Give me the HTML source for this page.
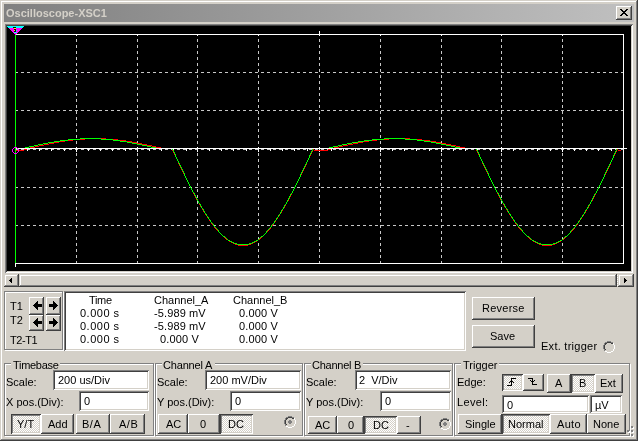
<!DOCTYPE html><html><head><meta charset="utf-8"><style>html,body{margin:0;padding:0;width:638px;height:441px;overflow:hidden;background:#d4d0c8}div,span,svg{position:absolute;box-sizing:border-box}span{white-space:pre;will-change:transform}</style></head><body><div style="left:0;top:0;width:638px;height:441px;background:#d4d0c8;box-shadow:inset -1px -1px #404040,inset 1px 1px #d4d0c8,inset -2px -2px #808080,inset 2px 2px #ffffff"></div>
<div style="left:4px;top:4px;width:630px;height:18px;background:linear-gradient(to right,#808080,#c0c0c0)"></div>
<span style="left:6px;top:7px;font:bold 11px/13px 'Liberation Sans',sans-serif;color:#d4d0c8;">Oscilloscope-XSC1</span>
<div style="left:616px;top:6px;width:16px;height:14px;background:#d4d0c8;box-shadow:inset -1px -1px #404040,inset 1px 1px #ffffff,inset -2px -2px #808080,inset 2px 2px #d4d0c8"></div>
<svg style="left:0;top:0" width="638" height="441" shape-rendering="crispEdges"><rect x="620" y="9" width="1" height="1"/><rect x="621" y="9" width="1" height="1"/><rect x="626" y="9" width="1" height="1"/><rect x="627" y="9" width="1" height="1"/><rect x="621" y="10" width="1" height="1"/><rect x="622" y="10" width="1" height="1"/><rect x="625" y="10" width="1" height="1"/><rect x="626" y="10" width="1" height="1"/><rect x="622" y="11" width="1" height="1"/><rect x="623" y="11" width="1" height="1"/><rect x="624" y="11" width="1" height="1"/><rect x="625" y="11" width="1" height="1"/><rect x="623" y="12" width="1" height="1"/><rect x="624" y="12" width="1" height="1"/><rect x="622" y="13" width="1" height="1"/><rect x="623" y="13" width="1" height="1"/><rect x="624" y="13" width="1" height="1"/><rect x="625" y="13" width="1" height="1"/><rect x="621" y="14" width="1" height="1"/><rect x="622" y="14" width="1" height="1"/><rect x="625" y="14" width="1" height="1"/><rect x="626" y="14" width="1" height="1"/><rect x="620" y="15" width="1" height="1"/><rect x="621" y="15" width="1" height="1"/><rect x="626" y="15" width="1" height="1"/><rect x="627" y="15" width="1" height="1"/></svg>
<div style="left:5px;top:24px;width:628px;height:249px;background:#000;box-shadow:inset 1px 1px #808080,inset -1px -1px #ffffff,inset 2px 2px #404040,inset -2px -2px #d4d0c8"></div>
<svg style="left:0;top:0" width="638" height="441" shape-rendering="crispEdges"><line x1="76.5" y1="39" x2="76.5" y2="263" stroke="#c8c8c8" stroke-width="1" stroke-dasharray="3 3"/><line x1="137.5" y1="39" x2="137.5" y2="263" stroke="#c8c8c8" stroke-width="1" stroke-dasharray="3 3"/><line x1="197.5" y1="39" x2="197.5" y2="263" stroke="#c8c8c8" stroke-width="1" stroke-dasharray="3 3"/><line x1="258.5" y1="39" x2="258.5" y2="263" stroke="#c8c8c8" stroke-width="1" stroke-dasharray="3 3"/><line x1="319.5" y1="39" x2="319.5" y2="263" stroke="#c8c8c8" stroke-width="1" stroke-dasharray="3 3"/><line x1="380.5" y1="39" x2="380.5" y2="263" stroke="#c8c8c8" stroke-width="1" stroke-dasharray="3 3"/><line x1="441.5" y1="39" x2="441.5" y2="263" stroke="#c8c8c8" stroke-width="1" stroke-dasharray="3 3"/><line x1="501.5" y1="39" x2="501.5" y2="263" stroke="#c8c8c8" stroke-width="1" stroke-dasharray="3 3"/><line x1="562.5" y1="39" x2="562.5" y2="263" stroke="#c8c8c8" stroke-width="1" stroke-dasharray="3 3"/><line x1="15" y1="72.5" x2="623" y2="72.5" stroke="#c8c8c8" stroke-width="1" stroke-dasharray="3 3"/><line x1="15" y1="110.5" x2="623" y2="110.5" stroke="#c8c8c8" stroke-width="1" stroke-dasharray="3 3"/><line x1="15" y1="149.5" x2="623" y2="149.5" stroke="#c8c8c8" stroke-width="1" stroke-dasharray="3 3"/><line x1="15" y1="187.5" x2="623" y2="187.5" stroke="#c8c8c8" stroke-width="1" stroke-dasharray="3 3"/><line x1="15" y1="225.5" x2="623" y2="225.5" stroke="#c8c8c8" stroke-width="1" stroke-dasharray="3 3"/><rect x="15" y="34" width="609" height="1" fill="#fff"/><rect x="623" y="34" width="1" height="230" fill="#fff"/><rect x="15" y="263" width="609" height="1" fill="#fff"/><rect x="15" y="34" width="1" height="233" fill="#fff"/><rect x="76" y="35" width="1" height="1" fill="#fff"/><rect x="137" y="35" width="1" height="1" fill="#fff"/><rect x="197" y="35" width="1" height="1" fill="#fff"/><rect x="258" y="35" width="1" height="1" fill="#fff"/><rect x="319" y="35" width="1" height="1" fill="#fff"/><rect x="380" y="35" width="1" height="1" fill="#fff"/><rect x="441" y="35" width="1" height="1" fill="#fff"/><rect x="501" y="35" width="1" height="1" fill="#fff"/><rect x="562" y="35" width="1" height="1" fill="#fff"/><rect x="319" y="31" width="1" height="3" fill="#fff"/><rect x="15" y="148" width="612" height="1" fill="#fff"/><rect x="15" y="149" width="1" height="2" fill="#fff"/><rect x="27" y="149" width="1" height="2" fill="#fff"/><rect x="39" y="149" width="1" height="2" fill="#fff"/><rect x="51" y="149" width="1" height="2" fill="#fff"/><rect x="64" y="149" width="1" height="2" fill="#fff"/><rect x="76" y="149" width="1" height="2" fill="#fff"/><rect x="88" y="149" width="1" height="2" fill="#fff"/><rect x="100" y="149" width="1" height="2" fill="#fff"/><rect x="112" y="149" width="1" height="2" fill="#fff"/><rect x="125" y="149" width="1" height="2" fill="#fff"/><rect x="137" y="149" width="1" height="2" fill="#fff"/><rect x="149" y="149" width="1" height="2" fill="#fff"/><rect x="161" y="149" width="1" height="2" fill="#fff"/><rect x="173" y="149" width="1" height="2" fill="#fff"/><rect x="186" y="149" width="1" height="2" fill="#fff"/><rect x="197" y="149" width="1" height="2" fill="#fff"/><rect x="209" y="149" width="1" height="2" fill="#fff"/><rect x="221" y="149" width="1" height="2" fill="#fff"/><rect x="233" y="149" width="1" height="2" fill="#fff"/><rect x="246" y="149" width="1" height="2" fill="#fff"/><rect x="258" y="149" width="1" height="2" fill="#fff"/><rect x="270" y="149" width="1" height="2" fill="#fff"/><rect x="282" y="149" width="1" height="2" fill="#fff"/><rect x="294" y="149" width="1" height="2" fill="#fff"/><rect x="307" y="149" width="1" height="2" fill="#fff"/><rect x="319" y="149" width="1" height="2" fill="#fff"/><rect x="331" y="149" width="1" height="2" fill="#fff"/><rect x="343" y="149" width="1" height="2" fill="#fff"/><rect x="355" y="149" width="1" height="2" fill="#fff"/><rect x="368" y="149" width="1" height="2" fill="#fff"/><rect x="380" y="149" width="1" height="2" fill="#fff"/><rect x="392" y="149" width="1" height="2" fill="#fff"/><rect x="404" y="149" width="1" height="2" fill="#fff"/><rect x="416" y="149" width="1" height="2" fill="#fff"/><rect x="429" y="149" width="1" height="2" fill="#fff"/><rect x="441" y="149" width="1" height="2" fill="#fff"/><rect x="453" y="149" width="1" height="2" fill="#fff"/><rect x="465" y="149" width="1" height="2" fill="#fff"/><rect x="477" y="149" width="1" height="2" fill="#fff"/><rect x="490" y="149" width="1" height="2" fill="#fff"/><rect x="501" y="149" width="1" height="2" fill="#fff"/><rect x="513" y="149" width="1" height="2" fill="#fff"/><rect x="525" y="149" width="1" height="2" fill="#fff"/><rect x="537" y="149" width="1" height="2" fill="#fff"/><rect x="550" y="149" width="1" height="2" fill="#fff"/><rect x="562" y="149" width="1" height="2" fill="#fff"/><rect x="574" y="149" width="1" height="2" fill="#fff"/><rect x="586" y="149" width="1" height="2" fill="#fff"/><rect x="598" y="149" width="1" height="2" fill="#fff"/><rect x="611" y="149" width="1" height="2" fill="#fff"/><rect x="15" y="147" width="1" height="1" fill="#fff"/><rect x="15" y="149" width="1" height="3" fill="#fff"/><rect x="76" y="147" width="1" height="1" fill="#fff"/><rect x="76" y="149" width="1" height="3" fill="#fff"/><rect x="137" y="147" width="1" height="1" fill="#fff"/><rect x="137" y="149" width="1" height="3" fill="#fff"/><rect x="197" y="147" width="1" height="1" fill="#fff"/><rect x="197" y="149" width="1" height="3" fill="#fff"/><rect x="258" y="147" width="1" height="1" fill="#fff"/><rect x="258" y="149" width="1" height="3" fill="#fff"/><rect x="319" y="147" width="1" height="1" fill="#fff"/><rect x="319" y="149" width="1" height="3" fill="#fff"/><rect x="380" y="147" width="1" height="1" fill="#fff"/><rect x="380" y="149" width="1" height="3" fill="#fff"/><rect x="441" y="147" width="1" height="1" fill="#fff"/><rect x="441" y="149" width="1" height="3" fill="#fff"/><rect x="501" y="147" width="1" height="1" fill="#fff"/><rect x="501" y="149" width="1" height="3" fill="#fff"/><rect x="562" y="147" width="1" height="1" fill="#fff"/><rect x="562" y="149" width="1" height="3" fill="#fff"/><rect x="623" y="147" width="1" height="1" fill="#fff"/><rect x="623" y="149" width="1" height="3" fill="#fff"/><rect x="16" y="150" width="1" height="1" fill="#ff0000"/><rect x="17" y="150" width="1" height="1" fill="#ff0000"/><rect x="18" y="150" width="1" height="1" fill="#ff0000"/><rect x="19" y="150" width="1" height="1" fill="#ff0000"/><rect x="20" y="150" width="1" height="1" fill="#ff0000"/><rect x="21" y="150" width="1" height="1" fill="#ff0000"/><rect x="22" y="150" width="1" height="1" fill="#ff0000"/><rect x="23" y="150" width="1" height="1" fill="#ff0000"/><rect x="24" y="149" width="1" height="1" fill="#ff0000"/><rect x="25" y="149" width="1" height="1" fill="#ff0000"/><rect x="26" y="149" width="1" height="1" fill="#ff0000"/><rect x="27" y="148" width="1" height="1" fill="#ff0000"/><rect x="28" y="148" width="1" height="1" fill="#ff0000"/><rect x="29" y="148" width="1" height="1" fill="#ff0000"/><rect x="30" y="147" width="1" height="1" fill="#ff0000"/><rect x="31" y="147" width="1" height="1" fill="#ff0000"/><rect x="32" y="147" width="1" height="1" fill="#ff0000"/><rect x="33" y="147" width="1" height="1" fill="#ff0000"/><rect x="34" y="147" width="1" height="1" fill="#ff0000"/><rect x="35" y="146" width="1" height="1" fill="#ff0000"/><rect x="36" y="146" width="1" height="1" fill="#ff0000"/><rect x="37" y="146" width="1" height="1" fill="#ff0000"/><rect x="38" y="146" width="1" height="1" fill="#ff0000"/><rect x="39" y="145" width="1" height="1" fill="#ff0000"/><rect x="40" y="145" width="1" height="1" fill="#ff0000"/><rect x="41" y="145" width="1" height="1" fill="#ff0000"/><rect x="42" y="145" width="1" height="1" fill="#ff0000"/><rect x="43" y="145" width="1" height="1" fill="#ff0000"/><rect x="44" y="144" width="1" height="1" fill="#ff0000"/><rect x="45" y="144" width="1" height="1" fill="#ff0000"/><rect x="46" y="144" width="1" height="1" fill="#ff0000"/><rect x="47" y="144" width="1" height="1" fill="#ff0000"/><rect x="48" y="144" width="1" height="1" fill="#ff0000"/><rect x="49" y="143" width="1" height="1" fill="#ff0000"/><rect x="50" y="143" width="1" height="1" fill="#ff0000"/><rect x="51" y="143" width="1" height="1" fill="#ff0000"/><rect x="52" y="143" width="1" height="1" fill="#ff0000"/><rect x="53" y="143" width="1" height="1" fill="#ff0000"/><rect x="54" y="142" width="1" height="1" fill="#ff0000"/><rect x="55" y="142" width="1" height="1" fill="#ff0000"/><rect x="56" y="142" width="1" height="1" fill="#ff0000"/><rect x="57" y="142" width="1" height="1" fill="#ff0000"/><rect x="58" y="142" width="1" height="1" fill="#ff0000"/><rect x="59" y="141" width="1" height="1" fill="#ff0000"/><rect x="60" y="141" width="1" height="1" fill="#ff0000"/><rect x="61" y="141" width="1" height="1" fill="#ff0000"/><rect x="62" y="141" width="1" height="1" fill="#ff0000"/><rect x="63" y="141" width="1" height="1" fill="#ff0000"/><rect x="64" y="141" width="1" height="1" fill="#ff0000"/><rect x="65" y="140" width="1" height="1" fill="#ff0000"/><rect x="66" y="140" width="1" height="1" fill="#ff0000"/><rect x="67" y="140" width="1" height="1" fill="#ff0000"/><rect x="68" y="140" width="1" height="1" fill="#ff0000"/><rect x="69" y="140" width="1" height="1" fill="#ff0000"/><rect x="70" y="140" width="1" height="1" fill="#ff0000"/><rect x="71" y="140" width="1" height="1" fill="#ff0000"/><rect x="72" y="140" width="1" height="1" fill="#ff0000"/><rect x="73" y="139" width="1" height="1" fill="#ff0000"/><rect x="74" y="139" width="1" height="1" fill="#ff0000"/><rect x="75" y="139" width="1" height="1" fill="#ff0000"/><rect x="76" y="139" width="1" height="1" fill="#ff0000"/><rect x="77" y="139" width="1" height="1" fill="#ff0000"/><rect x="78" y="139" width="1" height="1" fill="#ff0000"/><rect x="79" y="139" width="1" height="1" fill="#ff0000"/><rect x="80" y="139" width="1" height="1" fill="#ff0000"/><rect x="81" y="139" width="1" height="1" fill="#ff0000"/><rect x="82" y="139" width="1" height="1" fill="#ff0000"/><rect x="83" y="139" width="1" height="1" fill="#ff0000"/><rect x="84" y="139" width="1" height="1" fill="#ff0000"/><rect x="85" y="138" width="1" height="1" fill="#ff0000"/><rect x="86" y="138" width="1" height="1" fill="#ff0000"/><rect x="87" y="138" width="1" height="1" fill="#ff0000"/><rect x="88" y="138" width="1" height="1" fill="#ff0000"/><rect x="89" y="138" width="1" height="1" fill="#ff0000"/><rect x="90" y="138" width="1" height="1" fill="#ff0000"/><rect x="91" y="138" width="1" height="1" fill="#ff0000"/><rect x="92" y="138" width="1" height="1" fill="#ff0000"/><rect x="93" y="138" width="1" height="1" fill="#ff0000"/><rect x="94" y="138" width="1" height="1" fill="#ff0000"/><rect x="95" y="138" width="1" height="1" fill="#ff0000"/><rect x="96" y="138" width="1" height="1" fill="#ff0000"/><rect x="97" y="138" width="1" height="1" fill="#ff0000"/><rect x="98" y="138" width="1" height="1" fill="#ff0000"/><rect x="99" y="138" width="1" height="1" fill="#ff0000"/><rect x="100" y="138" width="1" height="1" fill="#ff0000"/><rect x="101" y="138" width="1" height="1" fill="#ff0000"/><rect x="102" y="138" width="1" height="1" fill="#ff0000"/><rect x="103" y="138" width="1" height="1" fill="#ff0000"/><rect x="104" y="138" width="1" height="1" fill="#ff0000"/><rect x="105" y="138" width="1" height="1" fill="#ff0000"/><rect x="106" y="139" width="1" height="1" fill="#ff0000"/><rect x="107" y="139" width="1" height="1" fill="#ff0000"/><rect x="108" y="139" width="1" height="1" fill="#ff0000"/><rect x="109" y="139" width="1" height="1" fill="#ff0000"/><rect x="110" y="139" width="1" height="1" fill="#ff0000"/><rect x="111" y="139" width="1" height="1" fill="#ff0000"/><rect x="112" y="139" width="1" height="1" fill="#ff0000"/><rect x="113" y="139" width="1" height="1" fill="#ff0000"/><rect x="114" y="139" width="1" height="1" fill="#ff0000"/><rect x="115" y="139" width="1" height="1" fill="#ff0000"/><rect x="116" y="139" width="1" height="1" fill="#ff0000"/><rect x="117" y="139" width="1" height="1" fill="#ff0000"/><rect x="118" y="140" width="1" height="1" fill="#ff0000"/><rect x="119" y="140" width="1" height="1" fill="#ff0000"/><rect x="120" y="140" width="1" height="1" fill="#ff0000"/><rect x="121" y="140" width="1" height="1" fill="#ff0000"/><rect x="122" y="140" width="1" height="1" fill="#ff0000"/><rect x="123" y="140" width="1" height="1" fill="#ff0000"/><rect x="124" y="140" width="1" height="1" fill="#ff0000"/><rect x="125" y="140" width="1" height="1" fill="#ff0000"/><rect x="126" y="141" width="1" height="1" fill="#ff0000"/><rect x="127" y="141" width="1" height="1" fill="#ff0000"/><rect x="128" y="141" width="1" height="1" fill="#ff0000"/><rect x="129" y="141" width="1" height="1" fill="#ff0000"/><rect x="130" y="141" width="1" height="1" fill="#ff0000"/><rect x="131" y="141" width="1" height="1" fill="#ff0000"/><rect x="132" y="142" width="1" height="1" fill="#ff0000"/><rect x="133" y="142" width="1" height="1" fill="#ff0000"/><rect x="134" y="142" width="1" height="1" fill="#ff0000"/><rect x="135" y="142" width="1" height="1" fill="#ff0000"/><rect x="136" y="142" width="1" height="1" fill="#ff0000"/><rect x="137" y="143" width="1" height="1" fill="#ff0000"/><rect x="138" y="143" width="1" height="1" fill="#ff0000"/><rect x="139" y="143" width="1" height="1" fill="#ff0000"/><rect x="140" y="143" width="1" height="1" fill="#ff0000"/><rect x="141" y="143" width="1" height="1" fill="#ff0000"/><rect x="142" y="144" width="1" height="1" fill="#ff0000"/><rect x="143" y="144" width="1" height="1" fill="#ff0000"/><rect x="144" y="144" width="1" height="1" fill="#ff0000"/><rect x="145" y="144" width="1" height="1" fill="#ff0000"/><rect x="146" y="144" width="1" height="1" fill="#ff0000"/><rect x="147" y="145" width="1" height="1" fill="#ff0000"/><rect x="148" y="145" width="1" height="1" fill="#ff0000"/><rect x="149" y="145" width="1" height="1" fill="#ff0000"/><rect x="150" y="145" width="1" height="1" fill="#ff0000"/><rect x="151" y="145" width="1" height="1" fill="#ff0000"/><rect x="152" y="146" width="1" height="1" fill="#ff0000"/><rect x="153" y="146" width="1" height="1" fill="#ff0000"/><rect x="154" y="146" width="1" height="1" fill="#ff0000"/><rect x="155" y="146" width="1" height="1" fill="#ff0000"/><rect x="156" y="147" width="1" height="1" fill="#ff0000"/><rect x="157" y="147" width="1" height="1" fill="#ff0000"/><rect x="158" y="147" width="1" height="1" fill="#ff0000"/><rect x="159" y="147" width="1" height="1" fill="#ff0000"/><rect x="160" y="147" width="1" height="1" fill="#ff0000"/><rect x="161" y="148" width="1" height="1" fill="#ff0000"/><rect x="162" y="148" width="1" height="1" fill="#ff0000"/><rect x="163" y="148" width="1" height="1" fill="#ff0000"/><rect x="164" y="148" width="1" height="1" fill="#ff0000"/><rect x="165" y="148" width="1" height="1" fill="#ff0000"/><rect x="166" y="148" width="1" height="1" fill="#ff0000"/><rect x="167" y="148" width="1" height="1" fill="#ff0000"/><rect x="168" y="148" width="1" height="1" fill="#ff0000"/><rect x="169" y="148" width="1" height="1" fill="#ff0000"/><rect x="170" y="148" width="1" height="1" fill="#ff0000"/><rect x="171" y="148" width="1" height="1" fill="#ff0000"/><rect x="172" y="149" width="1" height="2" fill="#ff0000"/><rect x="173" y="151" width="1" height="2" fill="#ff0000"/><rect x="174" y="153" width="1" height="2" fill="#ff0000"/><rect x="175" y="155" width="1" height="2" fill="#ff0000"/><rect x="176" y="157" width="1" height="2" fill="#ff0000"/><rect x="177" y="159" width="1" height="2" fill="#ff0000"/><rect x="178" y="161" width="1" height="3" fill="#ff0000"/><rect x="179" y="164" width="1" height="2" fill="#ff0000"/><rect x="180" y="166" width="1" height="2" fill="#ff0000"/><rect x="181" y="168" width="1" height="2" fill="#ff0000"/><rect x="182" y="170" width="1" height="2" fill="#ff0000"/><rect x="183" y="172" width="1" height="2" fill="#ff0000"/><rect x="184" y="174" width="1" height="2" fill="#ff0000"/><rect x="185" y="176" width="1" height="2" fill="#ff0000"/><rect x="186" y="178" width="1" height="2" fill="#ff0000"/><rect x="187" y="180" width="1" height="2" fill="#ff0000"/><rect x="188" y="182" width="1" height="2" fill="#ff0000"/><rect x="189" y="184" width="1" height="2" fill="#ff0000"/><rect x="190" y="186" width="1" height="2" fill="#ff0000"/><rect x="191" y="188" width="1" height="2" fill="#ff0000"/><rect x="192" y="190" width="1" height="2" fill="#ff0000"/><rect x="193" y="192" width="1" height="2" fill="#ff0000"/><rect x="194" y="194" width="1" height="2" fill="#ff0000"/><rect x="195" y="196" width="1" height="2" fill="#ff0000"/><rect x="196" y="198" width="1" height="2" fill="#ff0000"/><rect x="197" y="200" width="1" height="1" fill="#ff0000"/><rect x="198" y="201" width="1" height="2" fill="#ff0000"/><rect x="199" y="203" width="1" height="2" fill="#ff0000"/><rect x="200" y="205" width="1" height="2" fill="#ff0000"/><rect x="201" y="207" width="1" height="1" fill="#ff0000"/><rect x="202" y="208" width="1" height="2" fill="#ff0000"/><rect x="203" y="210" width="1" height="2" fill="#ff0000"/><rect x="204" y="212" width="1" height="1" fill="#ff0000"/><rect x="205" y="213" width="1" height="2" fill="#ff0000"/><rect x="206" y="215" width="1" height="1" fill="#ff0000"/><rect x="207" y="216" width="1" height="2" fill="#ff0000"/><rect x="208" y="218" width="1" height="1" fill="#ff0000"/><rect x="209" y="219" width="1" height="2" fill="#ff0000"/><rect x="210" y="221" width="1" height="1" fill="#ff0000"/><rect x="211" y="222" width="1" height="2" fill="#ff0000"/><rect x="212" y="224" width="1" height="1" fill="#ff0000"/><rect x="213" y="225" width="1" height="1" fill="#ff0000"/><rect x="214" y="226" width="1" height="2" fill="#ff0000"/><rect x="215" y="228" width="1" height="1" fill="#ff0000"/><rect x="216" y="229" width="1" height="1" fill="#ff0000"/><rect x="217" y="230" width="1" height="1" fill="#ff0000"/><rect x="218" y="231" width="1" height="1" fill="#ff0000"/><rect x="219" y="232" width="1" height="1" fill="#ff0000"/><rect x="220" y="233" width="1" height="1" fill="#ff0000"/><rect x="221" y="234" width="1" height="1" fill="#ff0000"/><rect x="222" y="235" width="1" height="1" fill="#ff0000"/><rect x="223" y="236" width="1" height="1" fill="#ff0000"/><rect x="224" y="237" width="1" height="1" fill="#ff0000"/><rect x="225" y="238" width="1" height="1" fill="#ff0000"/><rect x="226" y="239" width="1" height="1" fill="#ff0000"/><rect x="227" y="239" width="1" height="1" fill="#ff0000"/><rect x="228" y="240" width="1" height="1" fill="#ff0000"/><rect x="229" y="241" width="1" height="1" fill="#ff0000"/><rect x="230" y="241" width="1" height="1" fill="#ff0000"/><rect x="231" y="242" width="1" height="1" fill="#ff0000"/><rect x="232" y="242" width="1" height="1" fill="#ff0000"/><rect x="233" y="243" width="1" height="1" fill="#ff0000"/><rect x="234" y="243" width="1" height="1" fill="#ff0000"/><rect x="235" y="244" width="1" height="1" fill="#ff0000"/><rect x="236" y="244" width="1" height="1" fill="#ff0000"/><rect x="237" y="244" width="1" height="1" fill="#ff0000"/><rect x="238" y="245" width="1" height="1" fill="#ff0000"/><rect x="239" y="245" width="1" height="1" fill="#ff0000"/><rect x="240" y="245" width="1" height="1" fill="#ff0000"/><rect x="241" y="245" width="1" height="1" fill="#ff0000"/><rect x="242" y="245" width="1" height="1" fill="#ff0000"/><rect x="243" y="245" width="1" height="1" fill="#ff0000"/><rect x="244" y="245" width="1" height="1" fill="#ff0000"/><rect x="245" y="245" width="1" height="1" fill="#ff0000"/><rect x="246" y="245" width="1" height="1" fill="#ff0000"/><rect x="247" y="245" width="1" height="1" fill="#ff0000"/><rect x="248" y="244" width="1" height="1" fill="#ff0000"/><rect x="249" y="244" width="1" height="1" fill="#ff0000"/><rect x="250" y="244" width="1" height="1" fill="#ff0000"/><rect x="251" y="243" width="1" height="1" fill="#ff0000"/><rect x="252" y="243" width="1" height="1" fill="#ff0000"/><rect x="253" y="242" width="1" height="1" fill="#ff0000"/><rect x="254" y="242" width="1" height="1" fill="#ff0000"/><rect x="255" y="241" width="1" height="1" fill="#ff0000"/><rect x="256" y="241" width="1" height="1" fill="#ff0000"/><rect x="257" y="240" width="1" height="1" fill="#ff0000"/><rect x="258" y="239" width="1" height="1" fill="#ff0000"/><rect x="259" y="239" width="1" height="1" fill="#ff0000"/><rect x="260" y="238" width="1" height="1" fill="#ff0000"/><rect x="261" y="237" width="1" height="1" fill="#ff0000"/><rect x="262" y="236" width="1" height="1" fill="#ff0000"/><rect x="263" y="235" width="1" height="1" fill="#ff0000"/><rect x="264" y="234" width="1" height="1" fill="#ff0000"/><rect x="265" y="233" width="1" height="1" fill="#ff0000"/><rect x="266" y="232" width="1" height="1" fill="#ff0000"/><rect x="267" y="231" width="1" height="1" fill="#ff0000"/><rect x="268" y="230" width="1" height="1" fill="#ff0000"/><rect x="269" y="229" width="1" height="1" fill="#ff0000"/><rect x="270" y="227" width="1" height="2" fill="#ff0000"/><rect x="271" y="226" width="1" height="1" fill="#ff0000"/><rect x="272" y="225" width="1" height="1" fill="#ff0000"/><rect x="273" y="223" width="1" height="2" fill="#ff0000"/><rect x="274" y="222" width="1" height="1" fill="#ff0000"/><rect x="275" y="220" width="1" height="2" fill="#ff0000"/><rect x="276" y="219" width="1" height="1" fill="#ff0000"/><rect x="277" y="217" width="1" height="2" fill="#ff0000"/><rect x="278" y="216" width="1" height="1" fill="#ff0000"/><rect x="279" y="214" width="1" height="2" fill="#ff0000"/><rect x="280" y="213" width="1" height="1" fill="#ff0000"/><rect x="281" y="211" width="1" height="2" fill="#ff0000"/><rect x="282" y="209" width="1" height="2" fill="#ff0000"/><rect x="283" y="208" width="1" height="1" fill="#ff0000"/><rect x="284" y="206" width="1" height="2" fill="#ff0000"/><rect x="285" y="204" width="1" height="2" fill="#ff0000"/><rect x="286" y="202" width="1" height="2" fill="#ff0000"/><rect x="287" y="201" width="1" height="1" fill="#ff0000"/><rect x="288" y="199" width="1" height="2" fill="#ff0000"/><rect x="289" y="197" width="1" height="2" fill="#ff0000"/><rect x="290" y="195" width="1" height="2" fill="#ff0000"/><rect x="291" y="193" width="1" height="2" fill="#ff0000"/><rect x="292" y="191" width="1" height="2" fill="#ff0000"/><rect x="293" y="189" width="1" height="2" fill="#ff0000"/><rect x="294" y="187" width="1" height="2" fill="#ff0000"/><rect x="295" y="185" width="1" height="2" fill="#ff0000"/><rect x="296" y="183" width="1" height="2" fill="#ff0000"/><rect x="297" y="181" width="1" height="2" fill="#ff0000"/><rect x="298" y="179" width="1" height="2" fill="#ff0000"/><rect x="299" y="177" width="1" height="2" fill="#ff0000"/><rect x="300" y="175" width="1" height="2" fill="#ff0000"/><rect x="301" y="173" width="1" height="2" fill="#ff0000"/><rect x="302" y="171" width="1" height="2" fill="#ff0000"/><rect x="303" y="169" width="1" height="2" fill="#ff0000"/><rect x="304" y="167" width="1" height="2" fill="#ff0000"/><rect x="305" y="165" width="1" height="2" fill="#ff0000"/><rect x="306" y="162" width="1" height="3" fill="#ff0000"/><rect x="307" y="160" width="1" height="2" fill="#ff0000"/><rect x="308" y="158" width="1" height="2" fill="#ff0000"/><rect x="309" y="156" width="1" height="2" fill="#ff0000"/><rect x="310" y="154" width="1" height="2" fill="#ff0000"/><rect x="311" y="152" width="1" height="2" fill="#ff0000"/><rect x="312" y="150" width="1" height="2" fill="#ff0000"/><rect x="313" y="149" width="1" height="1" fill="#ff0000"/><rect x="314" y="150" width="1" height="1" fill="#ff0000"/><rect x="315" y="150" width="1" height="1" fill="#ff0000"/><rect x="316" y="150" width="1" height="1" fill="#ff0000"/><rect x="317" y="150" width="1" height="1" fill="#ff0000"/><rect x="318" y="150" width="1" height="1" fill="#ff0000"/><rect x="319" y="150" width="1" height="1" fill="#ff0000"/><rect x="320" y="150" width="1" height="1" fill="#ff0000"/><rect x="321" y="150" width="1" height="1" fill="#ff0000"/><rect x="322" y="150" width="1" height="1" fill="#ff0000"/><rect x="323" y="150" width="1" height="1" fill="#ff0000"/><rect x="324" y="150" width="1" height="1" fill="#ff0000"/><rect x="325" y="150" width="1" height="1" fill="#ff0000"/><rect x="326" y="150" width="1" height="1" fill="#ff0000"/><rect x="327" y="150" width="1" height="1" fill="#ff0000"/><rect x="328" y="149" width="1" height="1" fill="#ff0000"/><rect x="329" y="149" width="1" height="1" fill="#ff0000"/><rect x="330" y="149" width="1" height="1" fill="#ff0000"/><rect x="331" y="148" width="1" height="1" fill="#ff0000"/><rect x="332" y="148" width="1" height="1" fill="#ff0000"/><rect x="333" y="148" width="1" height="1" fill="#ff0000"/><rect x="334" y="147" width="1" height="1" fill="#ff0000"/><rect x="335" y="147" width="1" height="1" fill="#ff0000"/><rect x="336" y="147" width="1" height="1" fill="#ff0000"/><rect x="337" y="147" width="1" height="1" fill="#ff0000"/><rect x="338" y="147" width="1" height="1" fill="#ff0000"/><rect x="339" y="146" width="1" height="1" fill="#ff0000"/><rect x="340" y="146" width="1" height="1" fill="#ff0000"/><rect x="341" y="146" width="1" height="1" fill="#ff0000"/><rect x="342" y="146" width="1" height="1" fill="#ff0000"/><rect x="343" y="145" width="1" height="1" fill="#ff0000"/><rect x="344" y="145" width="1" height="1" fill="#ff0000"/><rect x="345" y="145" width="1" height="1" fill="#ff0000"/><rect x="346" y="145" width="1" height="1" fill="#ff0000"/><rect x="347" y="145" width="1" height="1" fill="#ff0000"/><rect x="348" y="144" width="1" height="1" fill="#ff0000"/><rect x="349" y="144" width="1" height="1" fill="#ff0000"/><rect x="350" y="144" width="1" height="1" fill="#ff0000"/><rect x="351" y="144" width="1" height="1" fill="#ff0000"/><rect x="352" y="144" width="1" height="1" fill="#ff0000"/><rect x="353" y="143" width="1" height="1" fill="#ff0000"/><rect x="354" y="143" width="1" height="1" fill="#ff0000"/><rect x="355" y="143" width="1" height="1" fill="#ff0000"/><rect x="356" y="143" width="1" height="1" fill="#ff0000"/><rect x="357" y="143" width="1" height="1" fill="#ff0000"/><rect x="358" y="142" width="1" height="1" fill="#ff0000"/><rect x="359" y="142" width="1" height="1" fill="#ff0000"/><rect x="360" y="142" width="1" height="1" fill="#ff0000"/><rect x="361" y="142" width="1" height="1" fill="#ff0000"/><rect x="362" y="142" width="1" height="1" fill="#ff0000"/><rect x="363" y="141" width="1" height="1" fill="#ff0000"/><rect x="364" y="141" width="1" height="1" fill="#ff0000"/><rect x="365" y="141" width="1" height="1" fill="#ff0000"/><rect x="366" y="141" width="1" height="1" fill="#ff0000"/><rect x="367" y="141" width="1" height="1" fill="#ff0000"/><rect x="368" y="141" width="1" height="1" fill="#ff0000"/><rect x="369" y="140" width="1" height="1" fill="#ff0000"/><rect x="370" y="140" width="1" height="1" fill="#ff0000"/><rect x="371" y="140" width="1" height="1" fill="#ff0000"/><rect x="372" y="140" width="1" height="1" fill="#ff0000"/><rect x="373" y="140" width="1" height="1" fill="#ff0000"/><rect x="374" y="140" width="1" height="1" fill="#ff0000"/><rect x="375" y="140" width="1" height="1" fill="#ff0000"/><rect x="376" y="140" width="1" height="1" fill="#ff0000"/><rect x="377" y="139" width="1" height="1" fill="#ff0000"/><rect x="378" y="139" width="1" height="1" fill="#ff0000"/><rect x="379" y="139" width="1" height="1" fill="#ff0000"/><rect x="380" y="139" width="1" height="1" fill="#ff0000"/><rect x="381" y="139" width="1" height="1" fill="#ff0000"/><rect x="382" y="139" width="1" height="1" fill="#ff0000"/><rect x="383" y="139" width="1" height="1" fill="#ff0000"/><rect x="384" y="139" width="1" height="1" fill="#ff0000"/><rect x="385" y="139" width="1" height="1" fill="#ff0000"/><rect x="386" y="139" width="1" height="1" fill="#ff0000"/><rect x="387" y="139" width="1" height="1" fill="#ff0000"/><rect x="388" y="139" width="1" height="1" fill="#ff0000"/><rect x="389" y="138" width="1" height="1" fill="#ff0000"/><rect x="390" y="138" width="1" height="1" fill="#ff0000"/><rect x="391" y="138" width="1" height="1" fill="#ff0000"/><rect x="392" y="138" width="1" height="1" fill="#ff0000"/><rect x="393" y="138" width="1" height="1" fill="#ff0000"/><rect x="394" y="138" width="1" height="1" fill="#ff0000"/><rect x="395" y="138" width="1" height="1" fill="#ff0000"/><rect x="396" y="138" width="1" height="1" fill="#ff0000"/><rect x="397" y="138" width="1" height="1" fill="#ff0000"/><rect x="398" y="138" width="1" height="1" fill="#ff0000"/><rect x="399" y="138" width="1" height="1" fill="#ff0000"/><rect x="400" y="138" width="1" height="1" fill="#ff0000"/><rect x="401" y="138" width="1" height="1" fill="#ff0000"/><rect x="402" y="138" width="1" height="1" fill="#ff0000"/><rect x="403" y="138" width="1" height="1" fill="#ff0000"/><rect x="404" y="138" width="1" height="1" fill="#ff0000"/><rect x="405" y="138" width="1" height="1" fill="#ff0000"/><rect x="406" y="138" width="1" height="1" fill="#ff0000"/><rect x="407" y="138" width="1" height="1" fill="#ff0000"/><rect x="408" y="138" width="1" height="1" fill="#ff0000"/><rect x="409" y="138" width="1" height="1" fill="#ff0000"/><rect x="410" y="139" width="1" height="1" fill="#ff0000"/><rect x="411" y="139" width="1" height="1" fill="#ff0000"/><rect x="412" y="139" width="1" height="1" fill="#ff0000"/><rect x="413" y="139" width="1" height="1" fill="#ff0000"/><rect x="414" y="139" width="1" height="1" fill="#ff0000"/><rect x="415" y="139" width="1" height="1" fill="#ff0000"/><rect x="416" y="139" width="1" height="1" fill="#ff0000"/><rect x="417" y="139" width="1" height="1" fill="#ff0000"/><rect x="418" y="139" width="1" height="1" fill="#ff0000"/><rect x="419" y="139" width="1" height="1" fill="#ff0000"/><rect x="420" y="139" width="1" height="1" fill="#ff0000"/><rect x="421" y="139" width="1" height="1" fill="#ff0000"/><rect x="422" y="140" width="1" height="1" fill="#ff0000"/><rect x="423" y="140" width="1" height="1" fill="#ff0000"/><rect x="424" y="140" width="1" height="1" fill="#ff0000"/><rect x="425" y="140" width="1" height="1" fill="#ff0000"/><rect x="426" y="140" width="1" height="1" fill="#ff0000"/><rect x="427" y="140" width="1" height="1" fill="#ff0000"/><rect x="428" y="140" width="1" height="1" fill="#ff0000"/><rect x="429" y="140" width="1" height="1" fill="#ff0000"/><rect x="430" y="141" width="1" height="1" fill="#ff0000"/><rect x="431" y="141" width="1" height="1" fill="#ff0000"/><rect x="432" y="141" width="1" height="1" fill="#ff0000"/><rect x="433" y="141" width="1" height="1" fill="#ff0000"/><rect x="434" y="141" width="1" height="1" fill="#ff0000"/><rect x="435" y="141" width="1" height="1" fill="#ff0000"/><rect x="436" y="142" width="1" height="1" fill="#ff0000"/><rect x="437" y="142" width="1" height="1" fill="#ff0000"/><rect x="438" y="142" width="1" height="1" fill="#ff0000"/><rect x="439" y="142" width="1" height="1" fill="#ff0000"/><rect x="440" y="142" width="1" height="1" fill="#ff0000"/><rect x="441" y="143" width="1" height="1" fill="#ff0000"/><rect x="442" y="143" width="1" height="1" fill="#ff0000"/><rect x="443" y="143" width="1" height="1" fill="#ff0000"/><rect x="444" y="143" width="1" height="1" fill="#ff0000"/><rect x="445" y="143" width="1" height="1" fill="#ff0000"/><rect x="446" y="144" width="1" height="1" fill="#ff0000"/><rect x="447" y="144" width="1" height="1" fill="#ff0000"/><rect x="448" y="144" width="1" height="1" fill="#ff0000"/><rect x="449" y="144" width="1" height="1" fill="#ff0000"/><rect x="450" y="144" width="1" height="1" fill="#ff0000"/><rect x="451" y="145" width="1" height="1" fill="#ff0000"/><rect x="452" y="145" width="1" height="1" fill="#ff0000"/><rect x="453" y="145" width="1" height="1" fill="#ff0000"/><rect x="454" y="145" width="1" height="1" fill="#ff0000"/><rect x="455" y="145" width="1" height="1" fill="#ff0000"/><rect x="456" y="146" width="1" height="1" fill="#ff0000"/><rect x="457" y="146" width="1" height="1" fill="#ff0000"/><rect x="458" y="146" width="1" height="1" fill="#ff0000"/><rect x="459" y="146" width="1" height="1" fill="#ff0000"/><rect x="460" y="147" width="1" height="1" fill="#ff0000"/><rect x="461" y="147" width="1" height="1" fill="#ff0000"/><rect x="462" y="147" width="1" height="1" fill="#ff0000"/><rect x="463" y="147" width="1" height="1" fill="#ff0000"/><rect x="464" y="147" width="1" height="1" fill="#ff0000"/><rect x="465" y="148" width="1" height="1" fill="#ff0000"/><rect x="466" y="148" width="1" height="1" fill="#ff0000"/><rect x="467" y="148" width="1" height="1" fill="#ff0000"/><rect x="468" y="148" width="1" height="1" fill="#ff0000"/><rect x="469" y="148" width="1" height="1" fill="#ff0000"/><rect x="470" y="148" width="1" height="1" fill="#ff0000"/><rect x="471" y="148" width="1" height="1" fill="#ff0000"/><rect x="472" y="148" width="1" height="1" fill="#ff0000"/><rect x="473" y="148" width="1" height="1" fill="#ff0000"/><rect x="474" y="148" width="1" height="1" fill="#ff0000"/><rect x="475" y="148" width="1" height="1" fill="#ff0000"/><rect x="476" y="149" width="1" height="2" fill="#ff0000"/><rect x="477" y="151" width="1" height="2" fill="#ff0000"/><rect x="478" y="153" width="1" height="2" fill="#ff0000"/><rect x="479" y="155" width="1" height="2" fill="#ff0000"/><rect x="480" y="157" width="1" height="2" fill="#ff0000"/><rect x="481" y="159" width="1" height="2" fill="#ff0000"/><rect x="482" y="161" width="1" height="3" fill="#ff0000"/><rect x="483" y="164" width="1" height="2" fill="#ff0000"/><rect x="484" y="166" width="1" height="2" fill="#ff0000"/><rect x="485" y="168" width="1" height="2" fill="#ff0000"/><rect x="486" y="170" width="1" height="2" fill="#ff0000"/><rect x="487" y="172" width="1" height="2" fill="#ff0000"/><rect x="488" y="174" width="1" height="2" fill="#ff0000"/><rect x="489" y="176" width="1" height="2" fill="#ff0000"/><rect x="490" y="178" width="1" height="2" fill="#ff0000"/><rect x="491" y="180" width="1" height="2" fill="#ff0000"/><rect x="492" y="182" width="1" height="2" fill="#ff0000"/><rect x="493" y="184" width="1" height="2" fill="#ff0000"/><rect x="494" y="186" width="1" height="2" fill="#ff0000"/><rect x="495" y="188" width="1" height="2" fill="#ff0000"/><rect x="496" y="190" width="1" height="2" fill="#ff0000"/><rect x="497" y="192" width="1" height="2" fill="#ff0000"/><rect x="498" y="194" width="1" height="2" fill="#ff0000"/><rect x="499" y="196" width="1" height="2" fill="#ff0000"/><rect x="500" y="198" width="1" height="2" fill="#ff0000"/><rect x="501" y="200" width="1" height="1" fill="#ff0000"/><rect x="502" y="201" width="1" height="2" fill="#ff0000"/><rect x="503" y="203" width="1" height="2" fill="#ff0000"/><rect x="504" y="205" width="1" height="2" fill="#ff0000"/><rect x="505" y="207" width="1" height="1" fill="#ff0000"/><rect x="506" y="208" width="1" height="2" fill="#ff0000"/><rect x="507" y="210" width="1" height="2" fill="#ff0000"/><rect x="508" y="212" width="1" height="1" fill="#ff0000"/><rect x="509" y="213" width="1" height="2" fill="#ff0000"/><rect x="510" y="215" width="1" height="1" fill="#ff0000"/><rect x="511" y="216" width="1" height="2" fill="#ff0000"/><rect x="512" y="218" width="1" height="1" fill="#ff0000"/><rect x="513" y="219" width="1" height="2" fill="#ff0000"/><rect x="514" y="221" width="1" height="1" fill="#ff0000"/><rect x="515" y="222" width="1" height="2" fill="#ff0000"/><rect x="516" y="224" width="1" height="1" fill="#ff0000"/><rect x="517" y="225" width="1" height="1" fill="#ff0000"/><rect x="518" y="226" width="1" height="2" fill="#ff0000"/><rect x="519" y="228" width="1" height="1" fill="#ff0000"/><rect x="520" y="229" width="1" height="1" fill="#ff0000"/><rect x="521" y="230" width="1" height="1" fill="#ff0000"/><rect x="522" y="231" width="1" height="1" fill="#ff0000"/><rect x="523" y="232" width="1" height="1" fill="#ff0000"/><rect x="524" y="233" width="1" height="1" fill="#ff0000"/><rect x="525" y="234" width="1" height="1" fill="#ff0000"/><rect x="526" y="235" width="1" height="1" fill="#ff0000"/><rect x="527" y="236" width="1" height="1" fill="#ff0000"/><rect x="528" y="237" width="1" height="1" fill="#ff0000"/><rect x="529" y="238" width="1" height="1" fill="#ff0000"/><rect x="530" y="239" width="1" height="1" fill="#ff0000"/><rect x="531" y="239" width="1" height="1" fill="#ff0000"/><rect x="532" y="240" width="1" height="1" fill="#ff0000"/><rect x="533" y="241" width="1" height="1" fill="#ff0000"/><rect x="534" y="241" width="1" height="1" fill="#ff0000"/><rect x="535" y="242" width="1" height="1" fill="#ff0000"/><rect x="536" y="242" width="1" height="1" fill="#ff0000"/><rect x="537" y="243" width="1" height="1" fill="#ff0000"/><rect x="538" y="243" width="1" height="1" fill="#ff0000"/><rect x="539" y="244" width="1" height="1" fill="#ff0000"/><rect x="540" y="244" width="1" height="1" fill="#ff0000"/><rect x="541" y="244" width="1" height="1" fill="#ff0000"/><rect x="542" y="245" width="1" height="1" fill="#ff0000"/><rect x="543" y="245" width="1" height="1" fill="#ff0000"/><rect x="544" y="245" width="1" height="1" fill="#ff0000"/><rect x="545" y="245" width="1" height="1" fill="#ff0000"/><rect x="546" y="245" width="1" height="1" fill="#ff0000"/><rect x="547" y="245" width="1" height="1" fill="#ff0000"/><rect x="548" y="245" width="1" height="1" fill="#ff0000"/><rect x="549" y="245" width="1" height="1" fill="#ff0000"/><rect x="550" y="245" width="1" height="1" fill="#ff0000"/><rect x="551" y="245" width="1" height="1" fill="#ff0000"/><rect x="552" y="244" width="1" height="1" fill="#ff0000"/><rect x="553" y="244" width="1" height="1" fill="#ff0000"/><rect x="554" y="244" width="1" height="1" fill="#ff0000"/><rect x="555" y="243" width="1" height="1" fill="#ff0000"/><rect x="556" y="243" width="1" height="1" fill="#ff0000"/><rect x="557" y="242" width="1" height="1" fill="#ff0000"/><rect x="558" y="242" width="1" height="1" fill="#ff0000"/><rect x="559" y="241" width="1" height="1" fill="#ff0000"/><rect x="560" y="241" width="1" height="1" fill="#ff0000"/><rect x="561" y="240" width="1" height="1" fill="#ff0000"/><rect x="562" y="239" width="1" height="1" fill="#ff0000"/><rect x="563" y="239" width="1" height="1" fill="#ff0000"/><rect x="564" y="238" width="1" height="1" fill="#ff0000"/><rect x="565" y="237" width="1" height="1" fill="#ff0000"/><rect x="566" y="236" width="1" height="1" fill="#ff0000"/><rect x="567" y="235" width="1" height="1" fill="#ff0000"/><rect x="568" y="234" width="1" height="1" fill="#ff0000"/><rect x="569" y="233" width="1" height="1" fill="#ff0000"/><rect x="570" y="232" width="1" height="1" fill="#ff0000"/><rect x="571" y="231" width="1" height="1" fill="#ff0000"/><rect x="572" y="230" width="1" height="1" fill="#ff0000"/><rect x="573" y="229" width="1" height="1" fill="#ff0000"/><rect x="574" y="227" width="1" height="2" fill="#ff0000"/><rect x="575" y="226" width="1" height="1" fill="#ff0000"/><rect x="576" y="225" width="1" height="1" fill="#ff0000"/><rect x="577" y="223" width="1" height="2" fill="#ff0000"/><rect x="578" y="222" width="1" height="1" fill="#ff0000"/><rect x="579" y="220" width="1" height="2" fill="#ff0000"/><rect x="580" y="219" width="1" height="1" fill="#ff0000"/><rect x="581" y="217" width="1" height="2" fill="#ff0000"/><rect x="582" y="216" width="1" height="1" fill="#ff0000"/><rect x="583" y="214" width="1" height="2" fill="#ff0000"/><rect x="584" y="213" width="1" height="1" fill="#ff0000"/><rect x="585" y="211" width="1" height="2" fill="#ff0000"/><rect x="586" y="209" width="1" height="2" fill="#ff0000"/><rect x="587" y="208" width="1" height="1" fill="#ff0000"/><rect x="588" y="206" width="1" height="2" fill="#ff0000"/><rect x="589" y="204" width="1" height="2" fill="#ff0000"/><rect x="590" y="202" width="1" height="2" fill="#ff0000"/><rect x="591" y="201" width="1" height="1" fill="#ff0000"/><rect x="592" y="199" width="1" height="2" fill="#ff0000"/><rect x="593" y="197" width="1" height="2" fill="#ff0000"/><rect x="594" y="195" width="1" height="2" fill="#ff0000"/><rect x="595" y="193" width="1" height="2" fill="#ff0000"/><rect x="596" y="191" width="1" height="2" fill="#ff0000"/><rect x="597" y="189" width="1" height="2" fill="#ff0000"/><rect x="598" y="187" width="1" height="2" fill="#ff0000"/><rect x="599" y="185" width="1" height="2" fill="#ff0000"/><rect x="600" y="183" width="1" height="2" fill="#ff0000"/><rect x="601" y="181" width="1" height="2" fill="#ff0000"/><rect x="602" y="179" width="1" height="2" fill="#ff0000"/><rect x="603" y="177" width="1" height="2" fill="#ff0000"/><rect x="604" y="175" width="1" height="2" fill="#ff0000"/><rect x="605" y="173" width="1" height="2" fill="#ff0000"/><rect x="606" y="171" width="1" height="2" fill="#ff0000"/><rect x="607" y="169" width="1" height="2" fill="#ff0000"/><rect x="608" y="167" width="1" height="2" fill="#ff0000"/><rect x="609" y="165" width="1" height="2" fill="#ff0000"/><rect x="610" y="162" width="1" height="3" fill="#ff0000"/><rect x="611" y="160" width="1" height="2" fill="#ff0000"/><rect x="612" y="158" width="1" height="2" fill="#ff0000"/><rect x="613" y="156" width="1" height="2" fill="#ff0000"/><rect x="614" y="154" width="1" height="2" fill="#ff0000"/><rect x="615" y="152" width="1" height="2" fill="#ff0000"/><rect x="616" y="150" width="1" height="2" fill="#ff0000"/><rect x="617" y="149" width="1" height="1" fill="#ff0000"/><rect x="618" y="150" width="1" height="1" fill="#ff0000"/><rect x="619" y="150" width="1" height="1" fill="#ff0000"/><rect x="620" y="150" width="1" height="1" fill="#ff0000"/><rect x="16" y="148" width="1" height="1" fill="#00ff00"/><rect x="17" y="148" width="1" height="1" fill="#00ff00"/><rect x="18" y="148" width="1" height="1" fill="#00ff00"/><rect x="19" y="148" width="1" height="1" fill="#00ff00"/><rect x="20" y="148" width="1" height="1" fill="#00ff00"/><rect x="21" y="148" width="1" height="1" fill="#00ff00"/><rect x="22" y="148" width="1" height="1" fill="#00ff00"/><rect x="23" y="148" width="1" height="1" fill="#00ff00"/><rect x="24" y="148" width="1" height="1" fill="#00ff00"/><rect x="25" y="147" width="1" height="1" fill="#00ff00"/><rect x="26" y="147" width="1" height="1" fill="#00ff00"/><rect x="27" y="147" width="1" height="1" fill="#00ff00"/><rect x="28" y="147" width="1" height="1" fill="#00ff00"/><rect x="29" y="146" width="1" height="1" fill="#00ff00"/><rect x="30" y="146" width="1" height="1" fill="#00ff00"/><rect x="31" y="146" width="1" height="1" fill="#00ff00"/><rect x="32" y="146" width="1" height="1" fill="#00ff00"/><rect x="33" y="146" width="1" height="1" fill="#00ff00"/><rect x="34" y="145" width="1" height="1" fill="#00ff00"/><rect x="35" y="145" width="1" height="1" fill="#00ff00"/><rect x="36" y="145" width="1" height="1" fill="#00ff00"/><rect x="37" y="145" width="1" height="1" fill="#00ff00"/><rect x="38" y="144" width="1" height="1" fill="#00ff00"/><rect x="39" y="144" width="1" height="1" fill="#00ff00"/><rect x="40" y="144" width="1" height="1" fill="#00ff00"/><rect x="41" y="144" width="1" height="1" fill="#00ff00"/><rect x="42" y="144" width="1" height="1" fill="#00ff00"/><rect x="43" y="143" width="1" height="1" fill="#00ff00"/><rect x="44" y="143" width="1" height="1" fill="#00ff00"/><rect x="45" y="143" width="1" height="1" fill="#00ff00"/><rect x="46" y="143" width="1" height="1" fill="#00ff00"/><rect x="47" y="143" width="1" height="1" fill="#00ff00"/><rect x="48" y="142" width="1" height="1" fill="#00ff00"/><rect x="49" y="142" width="1" height="1" fill="#00ff00"/><rect x="50" y="142" width="1" height="1" fill="#00ff00"/><rect x="51" y="142" width="1" height="1" fill="#00ff00"/><rect x="52" y="142" width="1" height="1" fill="#00ff00"/><rect x="53" y="142" width="1" height="1" fill="#00ff00"/><rect x="54" y="141" width="1" height="1" fill="#00ff00"/><rect x="55" y="141" width="1" height="1" fill="#00ff00"/><rect x="56" y="141" width="1" height="1" fill="#00ff00"/><rect x="57" y="141" width="1" height="1" fill="#00ff00"/><rect x="58" y="141" width="1" height="1" fill="#00ff00"/><rect x="59" y="141" width="1" height="1" fill="#00ff00"/><rect x="60" y="140" width="1" height="1" fill="#00ff00"/><rect x="61" y="140" width="1" height="1" fill="#00ff00"/><rect x="62" y="140" width="1" height="1" fill="#00ff00"/><rect x="63" y="140" width="1" height="1" fill="#00ff00"/><rect x="64" y="140" width="1" height="1" fill="#00ff00"/><rect x="65" y="140" width="1" height="1" fill="#00ff00"/><rect x="66" y="140" width="1" height="1" fill="#00ff00"/><rect x="67" y="140" width="1" height="1" fill="#00ff00"/><rect x="68" y="139" width="1" height="1" fill="#00ff00"/><rect x="69" y="139" width="1" height="1" fill="#00ff00"/><rect x="70" y="139" width="1" height="1" fill="#00ff00"/><rect x="71" y="139" width="1" height="1" fill="#00ff00"/><rect x="72" y="139" width="1" height="1" fill="#00ff00"/><rect x="73" y="139" width="1" height="1" fill="#00ff00"/><rect x="74" y="139" width="1" height="1" fill="#00ff00"/><rect x="75" y="139" width="1" height="1" fill="#00ff00"/><rect x="76" y="139" width="1" height="1" fill="#00ff00"/><rect x="77" y="139" width="1" height="1" fill="#00ff00"/><rect x="78" y="139" width="1" height="1" fill="#00ff00"/><rect x="79" y="139" width="1" height="1" fill="#00ff00"/><rect x="80" y="138" width="1" height="1" fill="#00ff00"/><rect x="81" y="138" width="1" height="1" fill="#00ff00"/><rect x="82" y="138" width="1" height="1" fill="#00ff00"/><rect x="83" y="138" width="1" height="1" fill="#00ff00"/><rect x="84" y="138" width="1" height="1" fill="#00ff00"/><rect x="85" y="138" width="1" height="1" fill="#00ff00"/><rect x="86" y="138" width="1" height="1" fill="#00ff00"/><rect x="87" y="138" width="1" height="1" fill="#00ff00"/><rect x="88" y="138" width="1" height="1" fill="#00ff00"/><rect x="89" y="138" width="1" height="1" fill="#00ff00"/><rect x="90" y="138" width="1" height="1" fill="#00ff00"/><rect x="91" y="138" width="1" height="1" fill="#00ff00"/><rect x="92" y="138" width="1" height="1" fill="#00ff00"/><rect x="93" y="138" width="1" height="1" fill="#00ff00"/><rect x="94" y="138" width="1" height="1" fill="#00ff00"/><rect x="95" y="138" width="1" height="1" fill="#00ff00"/><rect x="96" y="138" width="1" height="1" fill="#00ff00"/><rect x="97" y="138" width="1" height="1" fill="#00ff00"/><rect x="98" y="138" width="1" height="1" fill="#00ff00"/><rect x="99" y="138" width="1" height="1" fill="#00ff00"/><rect x="100" y="138" width="1" height="1" fill="#00ff00"/><rect x="101" y="139" width="1" height="1" fill="#00ff00"/><rect x="102" y="139" width="1" height="1" fill="#00ff00"/><rect x="103" y="139" width="1" height="1" fill="#00ff00"/><rect x="104" y="139" width="1" height="1" fill="#00ff00"/><rect x="105" y="139" width="1" height="1" fill="#00ff00"/><rect x="106" y="139" width="1" height="1" fill="#00ff00"/><rect x="107" y="139" width="1" height="1" fill="#00ff00"/><rect x="108" y="139" width="1" height="1" fill="#00ff00"/><rect x="109" y="139" width="1" height="1" fill="#00ff00"/><rect x="110" y="139" width="1" height="1" fill="#00ff00"/><rect x="111" y="139" width="1" height="1" fill="#00ff00"/><rect x="112" y="139" width="1" height="1" fill="#00ff00"/><rect x="113" y="140" width="1" height="1" fill="#00ff00"/><rect x="114" y="140" width="1" height="1" fill="#00ff00"/><rect x="115" y="140" width="1" height="1" fill="#00ff00"/><rect x="116" y="140" width="1" height="1" fill="#00ff00"/><rect x="117" y="140" width="1" height="1" fill="#00ff00"/><rect x="118" y="140" width="1" height="1" fill="#00ff00"/><rect x="119" y="140" width="1" height="1" fill="#00ff00"/><rect x="120" y="141" width="1" height="1" fill="#00ff00"/><rect x="121" y="141" width="1" height="1" fill="#00ff00"/><rect x="122" y="141" width="1" height="1" fill="#00ff00"/><rect x="123" y="141" width="1" height="1" fill="#00ff00"/><rect x="124" y="141" width="1" height="1" fill="#00ff00"/><rect x="125" y="141" width="1" height="1" fill="#00ff00"/><rect x="126" y="141" width="1" height="1" fill="#00ff00"/><rect x="127" y="142" width="1" height="1" fill="#00ff00"/><rect x="128" y="142" width="1" height="1" fill="#00ff00"/><rect x="129" y="142" width="1" height="1" fill="#00ff00"/><rect x="130" y="142" width="1" height="1" fill="#00ff00"/><rect x="131" y="142" width="1" height="1" fill="#00ff00"/><rect x="132" y="143" width="1" height="1" fill="#00ff00"/><rect x="133" y="143" width="1" height="1" fill="#00ff00"/><rect x="134" y="143" width="1" height="1" fill="#00ff00"/><rect x="135" y="143" width="1" height="1" fill="#00ff00"/><rect x="136" y="143" width="1" height="1" fill="#00ff00"/><rect x="137" y="144" width="1" height="1" fill="#00ff00"/><rect x="138" y="144" width="1" height="1" fill="#00ff00"/><rect x="139" y="144" width="1" height="1" fill="#00ff00"/><rect x="140" y="144" width="1" height="1" fill="#00ff00"/><rect x="141" y="144" width="1" height="1" fill="#00ff00"/><rect x="142" y="145" width="1" height="1" fill="#00ff00"/><rect x="143" y="145" width="1" height="1" fill="#00ff00"/><rect x="144" y="145" width="1" height="1" fill="#00ff00"/><rect x="145" y="145" width="1" height="1" fill="#00ff00"/><rect x="146" y="145" width="1" height="1" fill="#00ff00"/><rect x="147" y="146" width="1" height="1" fill="#00ff00"/><rect x="148" y="146" width="1" height="1" fill="#00ff00"/><rect x="149" y="146" width="1" height="1" fill="#00ff00"/><rect x="150" y="146" width="1" height="1" fill="#00ff00"/><rect x="151" y="147" width="1" height="1" fill="#00ff00"/><rect x="152" y="147" width="1" height="1" fill="#00ff00"/><rect x="153" y="147" width="1" height="1" fill="#00ff00"/><rect x="154" y="147" width="1" height="1" fill="#00ff00"/><rect x="155" y="147" width="1" height="1" fill="#00ff00"/><rect x="156" y="148" width="1" height="1" fill="#00ff00"/><rect x="157" y="148" width="1" height="1" fill="#00ff00"/><rect x="158" y="148" width="1" height="1" fill="#00ff00"/><rect x="159" y="148" width="1" height="1" fill="#00ff00"/><rect x="160" y="148" width="1" height="1" fill="#00ff00"/><rect x="161" y="148" width="1" height="1" fill="#00ff00"/><rect x="162" y="148" width="1" height="1" fill="#00ff00"/><rect x="163" y="148" width="1" height="1" fill="#00ff00"/><rect x="164" y="148" width="1" height="1" fill="#00ff00"/><rect x="165" y="148" width="1" height="1" fill="#00ff00"/><rect x="166" y="148" width="1" height="1" fill="#00ff00"/><rect x="167" y="148" width="1" height="1" fill="#00ff00"/><rect x="168" y="148" width="1" height="1" fill="#00ff00"/><rect x="169" y="148" width="1" height="1" fill="#00ff00"/><rect x="170" y="148" width="1" height="1" fill="#00ff00"/><rect x="171" y="148" width="1" height="1" fill="#00ff00"/><rect x="172" y="148" width="1" height="2" fill="#00ff00"/><rect x="173" y="150" width="1" height="2" fill="#00ff00"/><rect x="174" y="152" width="1" height="2" fill="#00ff00"/><rect x="175" y="154" width="1" height="3" fill="#00ff00"/><rect x="176" y="157" width="1" height="2" fill="#00ff00"/><rect x="177" y="159" width="1" height="2" fill="#00ff00"/><rect x="178" y="161" width="1" height="2" fill="#00ff00"/><rect x="179" y="163" width="1" height="2" fill="#00ff00"/><rect x="180" y="165" width="1" height="2" fill="#00ff00"/><rect x="181" y="167" width="1" height="2" fill="#00ff00"/><rect x="182" y="169" width="1" height="2" fill="#00ff00"/><rect x="183" y="171" width="1" height="2" fill="#00ff00"/><rect x="184" y="173" width="1" height="3" fill="#00ff00"/><rect x="185" y="176" width="1" height="2" fill="#00ff00"/><rect x="186" y="178" width="1" height="2" fill="#00ff00"/><rect x="187" y="180" width="1" height="2" fill="#00ff00"/><rect x="188" y="182" width="1" height="2" fill="#00ff00"/><rect x="189" y="184" width="1" height="2" fill="#00ff00"/><rect x="190" y="186" width="1" height="2" fill="#00ff00"/><rect x="191" y="188" width="1" height="2" fill="#00ff00"/><rect x="192" y="190" width="1" height="2" fill="#00ff00"/><rect x="193" y="192" width="1" height="1" fill="#00ff00"/><rect x="194" y="193" width="1" height="2" fill="#00ff00"/><rect x="195" y="195" width="1" height="2" fill="#00ff00"/><rect x="196" y="197" width="1" height="2" fill="#00ff00"/><rect x="197" y="199" width="1" height="2" fill="#00ff00"/><rect x="198" y="201" width="1" height="2" fill="#00ff00"/><rect x="199" y="203" width="1" height="1" fill="#00ff00"/><rect x="200" y="204" width="1" height="2" fill="#00ff00"/><rect x="201" y="206" width="1" height="2" fill="#00ff00"/><rect x="202" y="208" width="1" height="1" fill="#00ff00"/><rect x="203" y="209" width="1" height="2" fill="#00ff00"/><rect x="204" y="211" width="1" height="2" fill="#00ff00"/><rect x="205" y="213" width="1" height="1" fill="#00ff00"/><rect x="206" y="214" width="1" height="2" fill="#00ff00"/><rect x="207" y="216" width="1" height="1" fill="#00ff00"/><rect x="208" y="217" width="1" height="2" fill="#00ff00"/><rect x="209" y="219" width="1" height="1" fill="#00ff00"/><rect x="210" y="220" width="1" height="2" fill="#00ff00"/><rect x="211" y="222" width="1" height="1" fill="#00ff00"/><rect x="212" y="223" width="1" height="1" fill="#00ff00"/><rect x="213" y="224" width="1" height="2" fill="#00ff00"/><rect x="214" y="226" width="1" height="1" fill="#00ff00"/><rect x="215" y="227" width="1" height="1" fill="#00ff00"/><rect x="216" y="228" width="1" height="1" fill="#00ff00"/><rect x="217" y="229" width="1" height="1" fill="#00ff00"/><rect x="218" y="230" width="1" height="2" fill="#00ff00"/><rect x="219" y="232" width="1" height="1" fill="#00ff00"/><rect x="220" y="233" width="1" height="1" fill="#00ff00"/><rect x="221" y="234" width="1" height="1" fill="#00ff00"/><rect x="222" y="235" width="1" height="1" fill="#00ff00"/><rect x="223" y="236" width="1" height="1" fill="#00ff00"/><rect x="224" y="236" width="1" height="1" fill="#00ff00"/><rect x="225" y="237" width="1" height="1" fill="#00ff00"/><rect x="226" y="238" width="1" height="1" fill="#00ff00"/><rect x="227" y="239" width="1" height="1" fill="#00ff00"/><rect x="228" y="240" width="1" height="1" fill="#00ff00"/><rect x="229" y="240" width="1" height="1" fill="#00ff00"/><rect x="230" y="241" width="1" height="1" fill="#00ff00"/><rect x="231" y="241" width="1" height="1" fill="#00ff00"/><rect x="232" y="242" width="1" height="1" fill="#00ff00"/><rect x="233" y="242" width="1" height="1" fill="#00ff00"/><rect x="234" y="243" width="1" height="1" fill="#00ff00"/><rect x="235" y="243" width="1" height="1" fill="#00ff00"/><rect x="236" y="243" width="1" height="1" fill="#00ff00"/><rect x="237" y="244" width="1" height="1" fill="#00ff00"/><rect x="238" y="244" width="1" height="1" fill="#00ff00"/><rect x="239" y="244" width="1" height="1" fill="#00ff00"/><rect x="240" y="244" width="1" height="1" fill="#00ff00"/><rect x="241" y="244" width="1" height="1" fill="#00ff00"/><rect x="242" y="244" width="1" height="1" fill="#00ff00"/><rect x="243" y="244" width="1" height="1" fill="#00ff00"/><rect x="244" y="244" width="1" height="1" fill="#00ff00"/><rect x="245" y="244" width="1" height="1" fill="#00ff00"/><rect x="246" y="244" width="1" height="1" fill="#00ff00"/><rect x="247" y="244" width="1" height="1" fill="#00ff00"/><rect x="248" y="244" width="1" height="1" fill="#00ff00"/><rect x="249" y="243" width="1" height="1" fill="#00ff00"/><rect x="250" y="243" width="1" height="1" fill="#00ff00"/><rect x="251" y="243" width="1" height="1" fill="#00ff00"/><rect x="252" y="242" width="1" height="1" fill="#00ff00"/><rect x="253" y="242" width="1" height="1" fill="#00ff00"/><rect x="254" y="241" width="1" height="1" fill="#00ff00"/><rect x="255" y="241" width="1" height="1" fill="#00ff00"/><rect x="256" y="240" width="1" height="1" fill="#00ff00"/><rect x="257" y="240" width="1" height="1" fill="#00ff00"/><rect x="258" y="239" width="1" height="1" fill="#00ff00"/><rect x="259" y="238" width="1" height="1" fill="#00ff00"/><rect x="260" y="237" width="1" height="1" fill="#00ff00"/><rect x="261" y="236" width="1" height="1" fill="#00ff00"/><rect x="262" y="236" width="1" height="1" fill="#00ff00"/><rect x="263" y="235" width="1" height="1" fill="#00ff00"/><rect x="264" y="234" width="1" height="1" fill="#00ff00"/><rect x="265" y="233" width="1" height="1" fill="#00ff00"/><rect x="266" y="231" width="1" height="2" fill="#00ff00"/><rect x="267" y="230" width="1" height="1" fill="#00ff00"/><rect x="268" y="229" width="1" height="1" fill="#00ff00"/><rect x="269" y="228" width="1" height="1" fill="#00ff00"/><rect x="270" y="227" width="1" height="1" fill="#00ff00"/><rect x="271" y="225" width="1" height="2" fill="#00ff00"/><rect x="272" y="224" width="1" height="1" fill="#00ff00"/><rect x="273" y="223" width="1" height="1" fill="#00ff00"/><rect x="274" y="221" width="1" height="2" fill="#00ff00"/><rect x="275" y="220" width="1" height="1" fill="#00ff00"/><rect x="276" y="218" width="1" height="2" fill="#00ff00"/><rect x="277" y="217" width="1" height="1" fill="#00ff00"/><rect x="278" y="215" width="1" height="2" fill="#00ff00"/><rect x="279" y="214" width="1" height="1" fill="#00ff00"/><rect x="280" y="212" width="1" height="2" fill="#00ff00"/><rect x="281" y="210" width="1" height="2" fill="#00ff00"/><rect x="282" y="209" width="1" height="1" fill="#00ff00"/><rect x="283" y="207" width="1" height="2" fill="#00ff00"/><rect x="284" y="205" width="1" height="2" fill="#00ff00"/><rect x="285" y="204" width="1" height="1" fill="#00ff00"/><rect x="286" y="202" width="1" height="2" fill="#00ff00"/><rect x="287" y="200" width="1" height="2" fill="#00ff00"/><rect x="288" y="198" width="1" height="2" fill="#00ff00"/><rect x="289" y="196" width="1" height="2" fill="#00ff00"/><rect x="290" y="194" width="1" height="2" fill="#00ff00"/><rect x="291" y="193" width="1" height="1" fill="#00ff00"/><rect x="292" y="191" width="1" height="2" fill="#00ff00"/><rect x="293" y="189" width="1" height="2" fill="#00ff00"/><rect x="294" y="187" width="1" height="2" fill="#00ff00"/><rect x="295" y="185" width="1" height="2" fill="#00ff00"/><rect x="296" y="183" width="1" height="2" fill="#00ff00"/><rect x="297" y="181" width="1" height="2" fill="#00ff00"/><rect x="298" y="179" width="1" height="2" fill="#00ff00"/><rect x="299" y="177" width="1" height="2" fill="#00ff00"/><rect x="300" y="174" width="1" height="3" fill="#00ff00"/><rect x="301" y="172" width="1" height="2" fill="#00ff00"/><rect x="302" y="170" width="1" height="2" fill="#00ff00"/><rect x="303" y="168" width="1" height="2" fill="#00ff00"/><rect x="304" y="166" width="1" height="2" fill="#00ff00"/><rect x="305" y="164" width="1" height="2" fill="#00ff00"/><rect x="306" y="162" width="1" height="2" fill="#00ff00"/><rect x="307" y="160" width="1" height="2" fill="#00ff00"/><rect x="308" y="158" width="1" height="2" fill="#00ff00"/><rect x="309" y="155" width="1" height="3" fill="#00ff00"/><rect x="310" y="153" width="1" height="2" fill="#00ff00"/><rect x="311" y="151" width="1" height="2" fill="#00ff00"/><rect x="312" y="149" width="1" height="2" fill="#00ff00"/><rect x="313" y="148" width="1" height="1" fill="#00ff00"/><rect x="314" y="148" width="1" height="1" fill="#00ff00"/><rect x="315" y="148" width="1" height="1" fill="#00ff00"/><rect x="316" y="148" width="1" height="1" fill="#00ff00"/><rect x="317" y="148" width="1" height="1" fill="#00ff00"/><rect x="318" y="148" width="1" height="1" fill="#00ff00"/><rect x="319" y="148" width="1" height="1" fill="#00ff00"/><rect x="320" y="148" width="1" height="1" fill="#00ff00"/><rect x="321" y="148" width="1" height="1" fill="#00ff00"/><rect x="322" y="148" width="1" height="1" fill="#00ff00"/><rect x="323" y="148" width="1" height="1" fill="#00ff00"/><rect x="324" y="148" width="1" height="1" fill="#00ff00"/><rect x="325" y="148" width="1" height="1" fill="#00ff00"/><rect x="326" y="148" width="1" height="1" fill="#00ff00"/><rect x="327" y="148" width="1" height="1" fill="#00ff00"/><rect x="328" y="148" width="1" height="1" fill="#00ff00"/><rect x="329" y="147" width="1" height="1" fill="#00ff00"/><rect x="330" y="147" width="1" height="1" fill="#00ff00"/><rect x="331" y="147" width="1" height="1" fill="#00ff00"/><rect x="332" y="147" width="1" height="1" fill="#00ff00"/><rect x="333" y="146" width="1" height="1" fill="#00ff00"/><rect x="334" y="146" width="1" height="1" fill="#00ff00"/><rect x="335" y="146" width="1" height="1" fill="#00ff00"/><rect x="336" y="146" width="1" height="1" fill="#00ff00"/><rect x="337" y="146" width="1" height="1" fill="#00ff00"/><rect x="338" y="145" width="1" height="1" fill="#00ff00"/><rect x="339" y="145" width="1" height="1" fill="#00ff00"/><rect x="340" y="145" width="1" height="1" fill="#00ff00"/><rect x="341" y="145" width="1" height="1" fill="#00ff00"/><rect x="342" y="144" width="1" height="1" fill="#00ff00"/><rect x="343" y="144" width="1" height="1" fill="#00ff00"/><rect x="344" y="144" width="1" height="1" fill="#00ff00"/><rect x="345" y="144" width="1" height="1" fill="#00ff00"/><rect x="346" y="144" width="1" height="1" fill="#00ff00"/><rect x="347" y="143" width="1" height="1" fill="#00ff00"/><rect x="348" y="143" width="1" height="1" fill="#00ff00"/><rect x="349" y="143" width="1" height="1" fill="#00ff00"/><rect x="350" y="143" width="1" height="1" fill="#00ff00"/><rect x="351" y="143" width="1" height="1" fill="#00ff00"/><rect x="352" y="142" width="1" height="1" fill="#00ff00"/><rect x="353" y="142" width="1" height="1" fill="#00ff00"/><rect x="354" y="142" width="1" height="1" fill="#00ff00"/><rect x="355" y="142" width="1" height="1" fill="#00ff00"/><rect x="356" y="142" width="1" height="1" fill="#00ff00"/><rect x="357" y="142" width="1" height="1" fill="#00ff00"/><rect x="358" y="141" width="1" height="1" fill="#00ff00"/><rect x="359" y="141" width="1" height="1" fill="#00ff00"/><rect x="360" y="141" width="1" height="1" fill="#00ff00"/><rect x="361" y="141" width="1" height="1" fill="#00ff00"/><rect x="362" y="141" width="1" height="1" fill="#00ff00"/><rect x="363" y="141" width="1" height="1" fill="#00ff00"/><rect x="364" y="140" width="1" height="1" fill="#00ff00"/><rect x="365" y="140" width="1" height="1" fill="#00ff00"/><rect x="366" y="140" width="1" height="1" fill="#00ff00"/><rect x="367" y="140" width="1" height="1" fill="#00ff00"/><rect x="368" y="140" width="1" height="1" fill="#00ff00"/><rect x="369" y="140" width="1" height="1" fill="#00ff00"/><rect x="370" y="140" width="1" height="1" fill="#00ff00"/><rect x="371" y="140" width="1" height="1" fill="#00ff00"/><rect x="372" y="139" width="1" height="1" fill="#00ff00"/><rect x="373" y="139" width="1" height="1" fill="#00ff00"/><rect x="374" y="139" width="1" height="1" fill="#00ff00"/><rect x="375" y="139" width="1" height="1" fill="#00ff00"/><rect x="376" y="139" width="1" height="1" fill="#00ff00"/><rect x="377" y="139" width="1" height="1" fill="#00ff00"/><rect x="378" y="139" width="1" height="1" fill="#00ff00"/><rect x="379" y="139" width="1" height="1" fill="#00ff00"/><rect x="380" y="139" width="1" height="1" fill="#00ff00"/><rect x="381" y="139" width="1" height="1" fill="#00ff00"/><rect x="382" y="139" width="1" height="1" fill="#00ff00"/><rect x="383" y="139" width="1" height="1" fill="#00ff00"/><rect x="384" y="138" width="1" height="1" fill="#00ff00"/><rect x="385" y="138" width="1" height="1" fill="#00ff00"/><rect x="386" y="138" width="1" height="1" fill="#00ff00"/><rect x="387" y="138" width="1" height="1" fill="#00ff00"/><rect x="388" y="138" width="1" height="1" fill="#00ff00"/><rect x="389" y="138" width="1" height="1" fill="#00ff00"/><rect x="390" y="138" width="1" height="1" fill="#00ff00"/><rect x="391" y="138" width="1" height="1" fill="#00ff00"/><rect x="392" y="138" width="1" height="1" fill="#00ff00"/><rect x="393" y="138" width="1" height="1" fill="#00ff00"/><rect x="394" y="138" width="1" height="1" fill="#00ff00"/><rect x="395" y="138" width="1" height="1" fill="#00ff00"/><rect x="396" y="138" width="1" height="1" fill="#00ff00"/><rect x="397" y="138" width="1" height="1" fill="#00ff00"/><rect x="398" y="138" width="1" height="1" fill="#00ff00"/><rect x="399" y="138" width="1" height="1" fill="#00ff00"/><rect x="400" y="138" width="1" height="1" fill="#00ff00"/><rect x="401" y="138" width="1" height="1" fill="#00ff00"/><rect x="402" y="138" width="1" height="1" fill="#00ff00"/><rect x="403" y="138" width="1" height="1" fill="#00ff00"/><rect x="404" y="138" width="1" height="1" fill="#00ff00"/><rect x="405" y="139" width="1" height="1" fill="#00ff00"/><rect x="406" y="139" width="1" height="1" fill="#00ff00"/><rect x="407" y="139" width="1" height="1" fill="#00ff00"/><rect x="408" y="139" width="1" height="1" fill="#00ff00"/><rect x="409" y="139" width="1" height="1" fill="#00ff00"/><rect x="410" y="139" width="1" height="1" fill="#00ff00"/><rect x="411" y="139" width="1" height="1" fill="#00ff00"/><rect x="412" y="139" width="1" height="1" fill="#00ff00"/><rect x="413" y="139" width="1" height="1" fill="#00ff00"/><rect x="414" y="139" width="1" height="1" fill="#00ff00"/><rect x="415" y="139" width="1" height="1" fill="#00ff00"/><rect x="416" y="139" width="1" height="1" fill="#00ff00"/><rect x="417" y="140" width="1" height="1" fill="#00ff00"/><rect x="418" y="140" width="1" height="1" fill="#00ff00"/><rect x="419" y="140" width="1" height="1" fill="#00ff00"/><rect x="420" y="140" width="1" height="1" fill="#00ff00"/><rect x="421" y="140" width="1" height="1" fill="#00ff00"/><rect x="422" y="140" width="1" height="1" fill="#00ff00"/><rect x="423" y="140" width="1" height="1" fill="#00ff00"/><rect x="424" y="141" width="1" height="1" fill="#00ff00"/><rect x="425" y="141" width="1" height="1" fill="#00ff00"/><rect x="426" y="141" width="1" height="1" fill="#00ff00"/><rect x="427" y="141" width="1" height="1" fill="#00ff00"/><rect x="428" y="141" width="1" height="1" fill="#00ff00"/><rect x="429" y="141" width="1" height="1" fill="#00ff00"/><rect x="430" y="141" width="1" height="1" fill="#00ff00"/><rect x="431" y="142" width="1" height="1" fill="#00ff00"/><rect x="432" y="142" width="1" height="1" fill="#00ff00"/><rect x="433" y="142" width="1" height="1" fill="#00ff00"/><rect x="434" y="142" width="1" height="1" fill="#00ff00"/><rect x="435" y="142" width="1" height="1" fill="#00ff00"/><rect x="436" y="143" width="1" height="1" fill="#00ff00"/><rect x="437" y="143" width="1" height="1" fill="#00ff00"/><rect x="438" y="143" width="1" height="1" fill="#00ff00"/><rect x="439" y="143" width="1" height="1" fill="#00ff00"/><rect x="440" y="143" width="1" height="1" fill="#00ff00"/><rect x="441" y="144" width="1" height="1" fill="#00ff00"/><rect x="442" y="144" width="1" height="1" fill="#00ff00"/><rect x="443" y="144" width="1" height="1" fill="#00ff00"/><rect x="444" y="144" width="1" height="1" fill="#00ff00"/><rect x="445" y="144" width="1" height="1" fill="#00ff00"/><rect x="446" y="145" width="1" height="1" fill="#00ff00"/><rect x="447" y="145" width="1" height="1" fill="#00ff00"/><rect x="448" y="145" width="1" height="1" fill="#00ff00"/><rect x="449" y="145" width="1" height="1" fill="#00ff00"/><rect x="450" y="145" width="1" height="1" fill="#00ff00"/><rect x="451" y="146" width="1" height="1" fill="#00ff00"/><rect x="452" y="146" width="1" height="1" fill="#00ff00"/><rect x="453" y="146" width="1" height="1" fill="#00ff00"/><rect x="454" y="146" width="1" height="1" fill="#00ff00"/><rect x="455" y="147" width="1" height="1" fill="#00ff00"/><rect x="456" y="147" width="1" height="1" fill="#00ff00"/><rect x="457" y="147" width="1" height="1" fill="#00ff00"/><rect x="458" y="147" width="1" height="1" fill="#00ff00"/><rect x="459" y="147" width="1" height="1" fill="#00ff00"/><rect x="460" y="148" width="1" height="1" fill="#00ff00"/><rect x="461" y="148" width="1" height="1" fill="#00ff00"/><rect x="462" y="148" width="1" height="1" fill="#00ff00"/><rect x="463" y="148" width="1" height="1" fill="#00ff00"/><rect x="464" y="148" width="1" height="1" fill="#00ff00"/><rect x="465" y="148" width="1" height="1" fill="#00ff00"/><rect x="466" y="148" width="1" height="1" fill="#00ff00"/><rect x="467" y="148" width="1" height="1" fill="#00ff00"/><rect x="468" y="148" width="1" height="1" fill="#00ff00"/><rect x="469" y="148" width="1" height="1" fill="#00ff00"/><rect x="470" y="148" width="1" height="1" fill="#00ff00"/><rect x="471" y="148" width="1" height="1" fill="#00ff00"/><rect x="472" y="148" width="1" height="1" fill="#00ff00"/><rect x="473" y="148" width="1" height="1" fill="#00ff00"/><rect x="474" y="148" width="1" height="1" fill="#00ff00"/><rect x="475" y="148" width="1" height="1" fill="#00ff00"/><rect x="476" y="148" width="1" height="2" fill="#00ff00"/><rect x="477" y="150" width="1" height="2" fill="#00ff00"/><rect x="478" y="152" width="1" height="2" fill="#00ff00"/><rect x="479" y="154" width="1" height="3" fill="#00ff00"/><rect x="480" y="157" width="1" height="2" fill="#00ff00"/><rect x="481" y="159" width="1" height="2" fill="#00ff00"/><rect x="482" y="161" width="1" height="2" fill="#00ff00"/><rect x="483" y="163" width="1" height="2" fill="#00ff00"/><rect x="484" y="165" width="1" height="2" fill="#00ff00"/><rect x="485" y="167" width="1" height="2" fill="#00ff00"/><rect x="486" y="169" width="1" height="2" fill="#00ff00"/><rect x="487" y="171" width="1" height="2" fill="#00ff00"/><rect x="488" y="173" width="1" height="3" fill="#00ff00"/><rect x="489" y="176" width="1" height="2" fill="#00ff00"/><rect x="490" y="178" width="1" height="2" fill="#00ff00"/><rect x="491" y="180" width="1" height="2" fill="#00ff00"/><rect x="492" y="182" width="1" height="2" fill="#00ff00"/><rect x="493" y="184" width="1" height="2" fill="#00ff00"/><rect x="494" y="186" width="1" height="2" fill="#00ff00"/><rect x="495" y="188" width="1" height="2" fill="#00ff00"/><rect x="496" y="190" width="1" height="2" fill="#00ff00"/><rect x="497" y="192" width="1" height="1" fill="#00ff00"/><rect x="498" y="193" width="1" height="2" fill="#00ff00"/><rect x="499" y="195" width="1" height="2" fill="#00ff00"/><rect x="500" y="197" width="1" height="2" fill="#00ff00"/><rect x="501" y="199" width="1" height="2" fill="#00ff00"/><rect x="502" y="201" width="1" height="2" fill="#00ff00"/><rect x="503" y="203" width="1" height="1" fill="#00ff00"/><rect x="504" y="204" width="1" height="2" fill="#00ff00"/><rect x="505" y="206" width="1" height="2" fill="#00ff00"/><rect x="506" y="208" width="1" height="1" fill="#00ff00"/><rect x="507" y="209" width="1" height="2" fill="#00ff00"/><rect x="508" y="211" width="1" height="2" fill="#00ff00"/><rect x="509" y="213" width="1" height="1" fill="#00ff00"/><rect x="510" y="214" width="1" height="2" fill="#00ff00"/><rect x="511" y="216" width="1" height="1" fill="#00ff00"/><rect x="512" y="217" width="1" height="2" fill="#00ff00"/><rect x="513" y="219" width="1" height="1" fill="#00ff00"/><rect x="514" y="220" width="1" height="2" fill="#00ff00"/><rect x="515" y="222" width="1" height="1" fill="#00ff00"/><rect x="516" y="223" width="1" height="1" fill="#00ff00"/><rect x="517" y="224" width="1" height="2" fill="#00ff00"/><rect x="518" y="226" width="1" height="1" fill="#00ff00"/><rect x="519" y="227" width="1" height="1" fill="#00ff00"/><rect x="520" y="228" width="1" height="1" fill="#00ff00"/><rect x="521" y="229" width="1" height="1" fill="#00ff00"/><rect x="522" y="230" width="1" height="2" fill="#00ff00"/><rect x="523" y="232" width="1" height="1" fill="#00ff00"/><rect x="524" y="233" width="1" height="1" fill="#00ff00"/><rect x="525" y="234" width="1" height="1" fill="#00ff00"/><rect x="526" y="235" width="1" height="1" fill="#00ff00"/><rect x="527" y="236" width="1" height="1" fill="#00ff00"/><rect x="528" y="236" width="1" height="1" fill="#00ff00"/><rect x="529" y="237" width="1" height="1" fill="#00ff00"/><rect x="530" y="238" width="1" height="1" fill="#00ff00"/><rect x="531" y="239" width="1" height="1" fill="#00ff00"/><rect x="532" y="240" width="1" height="1" fill="#00ff00"/><rect x="533" y="240" width="1" height="1" fill="#00ff00"/><rect x="534" y="241" width="1" height="1" fill="#00ff00"/><rect x="535" y="241" width="1" height="1" fill="#00ff00"/><rect x="536" y="242" width="1" height="1" fill="#00ff00"/><rect x="537" y="242" width="1" height="1" fill="#00ff00"/><rect x="538" y="243" width="1" height="1" fill="#00ff00"/><rect x="539" y="243" width="1" height="1" fill="#00ff00"/><rect x="540" y="243" width="1" height="1" fill="#00ff00"/><rect x="541" y="244" width="1" height="1" fill="#00ff00"/><rect x="542" y="244" width="1" height="1" fill="#00ff00"/><rect x="543" y="244" width="1" height="1" fill="#00ff00"/><rect x="544" y="244" width="1" height="1" fill="#00ff00"/><rect x="545" y="244" width="1" height="1" fill="#00ff00"/><rect x="546" y="244" width="1" height="1" fill="#00ff00"/><rect x="547" y="244" width="1" height="1" fill="#00ff00"/><rect x="548" y="244" width="1" height="1" fill="#00ff00"/><rect x="549" y="244" width="1" height="1" fill="#00ff00"/><rect x="550" y="244" width="1" height="1" fill="#00ff00"/><rect x="551" y="244" width="1" height="1" fill="#00ff00"/><rect x="552" y="244" width="1" height="1" fill="#00ff00"/><rect x="553" y="243" width="1" height="1" fill="#00ff00"/><rect x="554" y="243" width="1" height="1" fill="#00ff00"/><rect x="555" y="243" width="1" height="1" fill="#00ff00"/><rect x="556" y="242" width="1" height="1" fill="#00ff00"/><rect x="557" y="242" width="1" height="1" fill="#00ff00"/><rect x="558" y="241" width="1" height="1" fill="#00ff00"/><rect x="559" y="241" width="1" height="1" fill="#00ff00"/><rect x="560" y="240" width="1" height="1" fill="#00ff00"/><rect x="561" y="240" width="1" height="1" fill="#00ff00"/><rect x="562" y="239" width="1" height="1" fill="#00ff00"/><rect x="563" y="238" width="1" height="1" fill="#00ff00"/><rect x="564" y="237" width="1" height="1" fill="#00ff00"/><rect x="565" y="236" width="1" height="1" fill="#00ff00"/><rect x="566" y="236" width="1" height="1" fill="#00ff00"/><rect x="567" y="235" width="1" height="1" fill="#00ff00"/><rect x="568" y="234" width="1" height="1" fill="#00ff00"/><rect x="569" y="233" width="1" height="1" fill="#00ff00"/><rect x="570" y="231" width="1" height="2" fill="#00ff00"/><rect x="571" y="230" width="1" height="1" fill="#00ff00"/><rect x="572" y="229" width="1" height="1" fill="#00ff00"/><rect x="573" y="228" width="1" height="1" fill="#00ff00"/><rect x="574" y="227" width="1" height="1" fill="#00ff00"/><rect x="575" y="225" width="1" height="2" fill="#00ff00"/><rect x="576" y="224" width="1" height="1" fill="#00ff00"/><rect x="577" y="223" width="1" height="1" fill="#00ff00"/><rect x="578" y="221" width="1" height="2" fill="#00ff00"/><rect x="579" y="220" width="1" height="1" fill="#00ff00"/><rect x="580" y="218" width="1" height="2" fill="#00ff00"/><rect x="581" y="217" width="1" height="1" fill="#00ff00"/><rect x="582" y="215" width="1" height="2" fill="#00ff00"/><rect x="583" y="214" width="1" height="1" fill="#00ff00"/><rect x="584" y="212" width="1" height="2" fill="#00ff00"/><rect x="585" y="210" width="1" height="2" fill="#00ff00"/><rect x="586" y="209" width="1" height="1" fill="#00ff00"/><rect x="587" y="207" width="1" height="2" fill="#00ff00"/><rect x="588" y="205" width="1" height="2" fill="#00ff00"/><rect x="589" y="204" width="1" height="1" fill="#00ff00"/><rect x="590" y="202" width="1" height="2" fill="#00ff00"/><rect x="591" y="200" width="1" height="2" fill="#00ff00"/><rect x="592" y="198" width="1" height="2" fill="#00ff00"/><rect x="593" y="196" width="1" height="2" fill="#00ff00"/><rect x="594" y="194" width="1" height="2" fill="#00ff00"/><rect x="595" y="193" width="1" height="1" fill="#00ff00"/><rect x="596" y="191" width="1" height="2" fill="#00ff00"/><rect x="597" y="189" width="1" height="2" fill="#00ff00"/><rect x="598" y="187" width="1" height="2" fill="#00ff00"/><rect x="599" y="185" width="1" height="2" fill="#00ff00"/><rect x="600" y="183" width="1" height="2" fill="#00ff00"/><rect x="601" y="181" width="1" height="2" fill="#00ff00"/><rect x="602" y="179" width="1" height="2" fill="#00ff00"/><rect x="603" y="177" width="1" height="2" fill="#00ff00"/><rect x="604" y="174" width="1" height="3" fill="#00ff00"/><rect x="605" y="172" width="1" height="2" fill="#00ff00"/><rect x="606" y="170" width="1" height="2" fill="#00ff00"/><rect x="607" y="168" width="1" height="2" fill="#00ff00"/><rect x="608" y="166" width="1" height="2" fill="#00ff00"/><rect x="609" y="164" width="1" height="2" fill="#00ff00"/><rect x="610" y="162" width="1" height="2" fill="#00ff00"/><rect x="611" y="160" width="1" height="2" fill="#00ff00"/><rect x="612" y="158" width="1" height="2" fill="#00ff00"/><rect x="613" y="155" width="1" height="3" fill="#00ff00"/><rect x="614" y="153" width="1" height="2" fill="#00ff00"/><rect x="615" y="151" width="1" height="2" fill="#00ff00"/><rect x="616" y="149" width="1" height="2" fill="#00ff00"/><rect x="617" y="148" width="1" height="1" fill="#00ff00"/><rect x="618" y="148" width="1" height="1" fill="#00ff00"/><rect x="619" y="148" width="1" height="1" fill="#00ff00"/><rect x="620" y="148" width="1" height="1" fill="#00ff00"/><rect x="15" y="148" width="612" height="1" fill="#fff"/><rect x="15" y="34" width="1" height="229" fill="#00ff00"/><rect x="14" y="147" width="3" height="1" fill="#ff00ff"/><rect x="13" y="148" width="1" height="1" fill="#ff00ff"/><rect x="17" y="148" width="1" height="1" fill="#ff00ff"/><rect x="12" y="149" width="1" height="3" fill="#ff00ff"/><rect x="18" y="149" width="1" height="3" fill="#ff00ff"/><rect x="13" y="152" width="1" height="1" fill="#ff00ff"/><rect x="17" y="152" width="1" height="1" fill="#ff00ff"/><rect x="14" y="153" width="3" height="1" fill="#ff00ff"/><rect x="7" y="26" width="17" height="1" fill="#00ffff"/><rect x="8" y="27" width="15" height="1" fill="#00ffff"/><rect x="9" y="28" width="13" height="1" fill="#ff00ff"/><rect x="10" y="29" width="11" height="1" fill="#ff00ff"/><rect x="11" y="30" width="9" height="1" fill="#ff00ff"/><rect x="12" y="31" width="7" height="1" fill="#ff00ff"/><rect x="13" y="32" width="5" height="1" fill="#ff00ff"/><rect x="14" y="33" width="3" height="1" fill="#ff00ff"/><rect x="15" y="34" width="1" height="1" fill="#ff00ff"/><rect x="13" y="27" width="3" height="1" fill="#000"/><rect x="14" y="28" width="2" height="4" fill="#000"/><rect x="14" y="28" width="2" height="1" fill="#ffff00"/><rect x="14" y="30" width="1" height="1" fill="#ffff00"/><rect x="16" y="30" width="1" height="1" fill="#00ffff"/><rect x="14" y="32" width="3" height="1" fill="#00ffff"/></svg>
<div style="left:19px;top:274px;width:599px;height:13px;background:repeating-conic-gradient(#fff 0% 25%, #d4d0c8 0% 50%) 0 0/2px 2px"></div>
<div style="left:4px;top:274px;width:15px;height:13px;background:#d4d0c8;box-shadow:inset -1px -1px #404040,inset 1px 1px #d4d0c8,inset -2px -2px #808080,inset 2px 2px #ffffff"></div>
<div style="left:19px;top:274px;width:598px;height:13px;background:#d4d0c8;box-shadow:inset -1px -1px #404040,inset 1px 1px #d4d0c8,inset -2px -2px #808080,inset 2px 2px #ffffff"></div>
<div style="left:618px;top:274px;width:16px;height:13px;background:#d4d0c8;box-shadow:inset -1px -1px #404040,inset 1px 1px #d4d0c8,inset -2px -2px #808080,inset 2px 2px #ffffff"></div>
<svg style="left:0;top:0" width="638" height="441" shape-rendering="crispEdges"><rect x="9" y="280" width="1" height="1"/><rect x="10" y="279" width="1" height="3"/><rect x="11" y="278" width="1" height="5"/><rect x="626" y="280" width="1" height="1"/><rect x="625" y="279" width="1" height="3"/><rect x="624" y="278" width="1" height="5"/></svg>
<div style="left:5px;top:292px;width:59px;height:59px;box-shadow:inset 1px 1px #ffffff,inset -1px -1px #ffffff"></div>
<div style="left:4px;top:291px;width:59px;height:59px;box-shadow:inset 1px 1px #808080,inset -1px -1px #808080"></div>
<span style="left:10px;top:300px;font:11px/13px 'Liberation Sans',sans-serif;color:#000;">T1</span>
<span style="left:10px;top:314px;font:11px/13px 'Liberation Sans',sans-serif;color:#000;">T2</span>
<span style="left:10px;top:334px;font:11px/13px 'Liberation Sans',sans-serif;color:#000;letter-spacing:-0.4px">T2-T1</span>
<div style="left:29px;top:297px;width:15px;height:18px;background:#d4d0c8;box-shadow:inset -1px -1px #404040,inset 1px 1px #ffffff,inset -2px -2px #808080,inset 2px 2px #d4d0c8"></div>
<div style="left:46px;top:297px;width:15px;height:18px;background:#d4d0c8;box-shadow:inset -1px -1px #404040,inset 1px 1px #ffffff,inset -2px -2px #808080,inset 2px 2px #d4d0c8"></div>
<div style="left:29px;top:315px;width:15px;height:16px;background:#d4d0c8;box-shadow:inset -1px -1px #404040,inset 1px 1px #ffffff,inset -2px -2px #808080,inset 2px 2px #d4d0c8"></div>
<div style="left:46px;top:315px;width:15px;height:16px;background:#d4d0c8;box-shadow:inset -1px -1px #404040,inset 1px 1px #ffffff,inset -2px -2px #808080,inset 2px 2px #d4d0c8"></div>
<svg style="left:0;top:0" width="638" height="441" shape-rendering="crispEdges"><rect x="33" y="305" width="1" height="1"/><rect x="34" y="304" width="1" height="3"/><rect x="35" y="303" width="1" height="5"/><rect x="36" y="302" width="1" height="7"/><rect x="37" y="301" width="1" height="9"/><rect x="38" y="304" width="4" height="3"/><rect x="57" y="305" width="1" height="1"/><rect x="56" y="304" width="1" height="3"/><rect x="55" y="303" width="1" height="5"/><rect x="54" y="302" width="1" height="7"/><rect x="53" y="301" width="1" height="9"/><rect x="49" y="304" width="4" height="3"/><rect x="33" y="322" width="1" height="1"/><rect x="34" y="321" width="1" height="3"/><rect x="35" y="320" width="1" height="5"/><rect x="36" y="319" width="1" height="7"/><rect x="37" y="318" width="1" height="9"/><rect x="38" y="321" width="4" height="3"/><rect x="57" y="322" width="1" height="1"/><rect x="56" y="321" width="1" height="3"/><rect x="55" y="320" width="1" height="5"/><rect x="54" y="319" width="1" height="7"/><rect x="53" y="318" width="1" height="9"/><rect x="49" y="321" width="4" height="3"/></svg>
<div style="left:64px;top:291px;width:402px;height:60px;background:#fff;box-shadow:inset 1px 1px #808080,inset -1px -1px #ffffff,inset 2px 2px #404040,inset -2px -2px #d4d0c8"></div>
<span style="left:89px;top:294px;font:11px/13px 'Liberation Sans',sans-serif;color:#000;letter-spacing:-0.33px">Time</span>
<span style="left:80px;top:307px;font:11px/13px 'Liberation Sans',sans-serif;color:#000;letter-spacing:0.5px">0.000 s</span>
<span style="left:80px;top:320px;font:11px/13px 'Liberation Sans',sans-serif;color:#000;letter-spacing:0.5px">0.000 s</span>
<span style="left:80px;top:333px;font:11px/13px 'Liberation Sans',sans-serif;color:#000;letter-spacing:0.5px">0.000 s</span>
<span style="left:154px;top:294px;font:11px/13px 'Liberation Sans',sans-serif;color:#000;">Channel_A</span>
<span style="left:154px;top:307px;font:11px/13px 'Liberation Sans',sans-serif;color:#000;letter-spacing:0.12px">-5.989 mV</span>
<span style="left:154px;top:320px;font:11px/13px 'Liberation Sans',sans-serif;color:#000;letter-spacing:0.12px">-5.989 mV</span>
<span style="left:160px;top:333px;font:11px/13px 'Liberation Sans',sans-serif;color:#000;letter-spacing:0.17px">0.000 V</span>
<span style="left:233px;top:294px;font:11px/13px 'Liberation Sans',sans-serif;color:#000;">Channel_B</span>
<span style="left:239px;top:307px;font:11px/13px 'Liberation Sans',sans-serif;color:#000;letter-spacing:0.17px">0.000 V</span>
<span style="left:239px;top:320px;font:11px/13px 'Liberation Sans',sans-serif;color:#000;letter-spacing:0.17px">0.000 V</span>
<span style="left:239px;top:333px;font:11px/13px 'Liberation Sans',sans-serif;color:#000;letter-spacing:0.17px">0.000 V</span>
<div style="left:472px;top:297px;width:63px;height:23px;background:#d4d0c8;box-shadow:inset -1px -1px #404040,inset 1px 1px #ffffff,inset -2px -2px #808080,inset 2px 2px #d4d0c8"></div>
<span style="left:482px;top:302px;font:11px/13px 'Liberation Sans',sans-serif;color:#000;letter-spacing:0.25px">Reverse</span>
<div style="left:472px;top:325px;width:63px;height:23px;background:#d4d0c8;box-shadow:inset -1px -1px #404040,inset 1px 1px #ffffff,inset -2px -2px #808080,inset 2px 2px #d4d0c8"></div>
<span style="left:490px;top:330px;font:11px/13px 'Liberation Sans',sans-serif;color:#000;">Save</span>
<span style="left:541px;top:340px;font:11px/13px 'Liberation Sans',sans-serif;color:#000;letter-spacing:0.27px">Ext. trigger</span>
<svg style="left:603px;top:341px" width="12" height="12" shape-rendering="crispEdges"><rect x="2" y="2" width="8" height="8" fill="#d4d0c8"/><rect x="4" y="1" width="4" height="10" fill="#d4d0c8"/><rect x="1" y="4" width="10" height="4" fill="#d4d0c8"/><rect x="4" y="0" width="4" height="1" fill="#808080"/><rect x="2" y="1" width="2" height="1" fill="#808080"/><rect x="8" y="1" width="2" height="1" fill="#808080"/><rect x="1" y="2" width="1" height="2" fill="#808080"/><rect x="0" y="4" width="1" height="4" fill="#808080"/><rect x="1" y="8" width="1" height="2" fill="#808080"/><rect x="4" y="1" width="4" height="1" fill="#404040"/><rect x="2" y="2" width="2" height="1" fill="#404040"/><rect x="8" y="2" width="2" height="1" fill="#404040"/><rect x="2" y="3" width="1" height="1" fill="#404040"/><rect x="1" y="4" width="1" height="4" fill="#404040"/><rect x="2" y="8" width="1" height="1" fill="#404040"/><rect x="10" y="2" width="1" height="2" fill="#ffffff"/><rect x="11" y="4" width="1" height="4" fill="#ffffff"/><rect x="10" y="8" width="1" height="2" fill="#ffffff"/><rect x="8" y="10" width="2" height="1" fill="#ffffff"/><rect x="2" y="10" width="2" height="1" fill="#ffffff"/><rect x="4" y="11" width="4" height="1" fill="#ffffff"/><rect x="9" y="3" width="1" height="1" fill="#d4d0c8"/><rect x="10" y="4" width="1" height="4" fill="#d4d0c8"/><rect x="9" y="8" width="1" height="1" fill="#d4d0c8"/><rect x="8" y="9" width="2" height="1" fill="#d4d0c8"/><rect x="3" y="9" width="1" height="1" fill="#d4d0c8"/><rect x="4" y="10" width="4" height="1" fill="#d4d0c8"/><rect x="2" y="9" width="1" height="1" fill="#d4d0c8"/></svg>
<div style="left:5px;top:364px;width:150px;height:73px;box-shadow:inset 1px 1px #ffffff,inset -1px -1px #ffffff"></div>
<div style="left:4px;top:363px;width:150px;height:73px;box-shadow:inset 1px 1px #808080,inset -1px -1px #808080"></div>
<div style="left:11px;top:360px;width:49px;height:7px;background:#d4d0c8"></div>
<span style="left:13px;top:359px;font:11px/13px 'Liberation Sans',sans-serif;color:#000;letter-spacing:-0.3px">Timebase</span>
<span style="left:6px;top:376px;font:11px/13px 'Liberation Sans',sans-serif;color:#000;">Scale:</span>
<div style="left:53px;top:370px;width:96px;height:20px;background:#fff;box-shadow:inset 1px 1px #808080,inset -1px -1px #ffffff,inset 2px 2px #404040,inset -2px -2px #d4d0c8"></div>
<span style="left:58px;top:374px;font:11px/13px 'Liberation Sans',sans-serif;color:#000;">200 us/Div</span>
<span style="left:6px;top:396px;font:11px/13px 'Liberation Sans',sans-serif;color:#000;">X pos.(Div):</span>
<div style="left:79px;top:391px;width:70px;height:20px;background:#fff;box-shadow:inset 1px 1px #808080,inset -1px -1px #ffffff,inset 2px 2px #404040,inset -2px -2px #d4d0c8"></div>
<span style="left:84px;top:395px;font:11px/13px 'Liberation Sans',sans-serif;color:#000;">0</span>
<div style="left:11px;top:414px;width:30px;height:20px;background:repeating-conic-gradient(#fff 0% 25%, #d4d0c8 0% 50%) 0 0/2px 2px;box-shadow:inset 1px 1px #404040,inset -1px -1px #ffffff,inset 2px 2px #808080,inset -2px -2px #d4d0c8"></div>
<span style="left:17px;top:418px;font:11px/13px 'Liberation Sans',sans-serif;color:#000;">Y/T</span>
<div style="left:41px;top:414px;width:33px;height:20px;background:#d4d0c8;box-shadow:inset -1px -1px #404040,inset 1px 1px #ffffff,inset -2px -2px #808080,inset 2px 2px #d4d0c8"></div>
<span style="left:48px;top:418px;font:11px/13px 'Liberation Sans',sans-serif;color:#000;">Add</span>
<div style="left:76px;top:414px;width:34px;height:20px;background:#d4d0c8;box-shadow:inset -1px -1px #404040,inset 1px 1px #ffffff,inset -2px -2px #808080,inset 2px 2px #d4d0c8"></div>
<span style="left:82px;top:418px;font:11px/13px 'Liberation Sans',sans-serif;color:#000;letter-spacing:0.5px">B/A</span>
<div style="left:110px;top:414px;width:35px;height:20px;background:#d4d0c8;box-shadow:inset -1px -1px #404040,inset 1px 1px #ffffff,inset -2px -2px #808080,inset 2px 2px #d4d0c8"></div>
<span style="left:119px;top:418px;font:11px/13px 'Liberation Sans',sans-serif;color:#000;letter-spacing:0.5px">A/B</span>
<div style="left:156px;top:364px;width:148px;height:73px;box-shadow:inset 1px 1px #ffffff,inset -1px -1px #ffffff"></div>
<div style="left:155px;top:363px;width:148px;height:73px;box-shadow:inset 1px 1px #808080,inset -1px -1px #808080"></div>
<div style="left:162px;top:360px;width:53px;height:7px;background:#d4d0c8"></div>
<span style="left:163px;top:359px;font:11px/13px 'Liberation Sans',sans-serif;color:#000;letter-spacing:-0.17px">Channel A</span>
<span style="left:157px;top:376px;font:11px/13px 'Liberation Sans',sans-serif;color:#000;">Scale:</span>
<div style="left:205px;top:370px;width:96px;height:20px;background:#fff;box-shadow:inset 1px 1px #808080,inset -1px -1px #ffffff,inset 2px 2px #404040,inset -2px -2px #d4d0c8"></div>
<span style="left:210px;top:374px;font:11px/13px 'Liberation Sans',sans-serif;color:#000;">200 mV/Div</span>
<span style="left:157px;top:396px;font:11px/13px 'Liberation Sans',sans-serif;color:#000;">Y pos.(Div):</span>
<div style="left:230px;top:391px;width:71px;height:20px;background:#fff;box-shadow:inset 1px 1px #808080,inset -1px -1px #ffffff,inset 2px 2px #404040,inset -2px -2px #d4d0c8"></div>
<span style="left:235px;top:395px;font:11px/13px 'Liberation Sans',sans-serif;color:#000;">0</span>
<div style="left:158px;top:414px;width:30px;height:20px;background:#d4d0c8;box-shadow:inset -1px -1px #404040,inset 1px 1px #ffffff,inset -2px -2px #808080,inset 2px 2px #d4d0c8"></div>
<span style="left:166px;top:418px;font:11px/13px 'Liberation Sans',sans-serif;color:#000;">AC</span>
<div style="left:188px;top:414px;width:32px;height:20px;background:#d4d0c8;box-shadow:inset -1px -1px #404040,inset 1px 1px #ffffff,inset -2px -2px #808080,inset 2px 2px #d4d0c8"></div>
<span style="left:200px;top:418px;font:11px/13px 'Liberation Sans',sans-serif;color:#000;">0</span>
<div style="left:220px;top:414px;width:33px;height:20px;background:repeating-conic-gradient(#fff 0% 25%, #d4d0c8 0% 50%) 0 0/2px 2px;box-shadow:inset 1px 1px #404040,inset -1px -1px #ffffff,inset 2px 2px #808080,inset -2px -2px #d4d0c8"></div>
<span style="left:228px;top:418px;font:11px/13px 'Liberation Sans',sans-serif;color:#000;">DC</span>
<svg style="left:284px;top:416px" width="12" height="12" shape-rendering="crispEdges"><rect x="2" y="2" width="8" height="8" fill="#d4d0c8"/><rect x="4" y="1" width="4" height="10" fill="#d4d0c8"/><rect x="1" y="4" width="10" height="4" fill="#d4d0c8"/><rect x="4" y="0" width="4" height="1" fill="#808080"/><rect x="2" y="1" width="2" height="1" fill="#808080"/><rect x="8" y="1" width="2" height="1" fill="#808080"/><rect x="1" y="2" width="1" height="2" fill="#808080"/><rect x="0" y="4" width="1" height="4" fill="#808080"/><rect x="1" y="8" width="1" height="2" fill="#808080"/><rect x="4" y="1" width="4" height="1" fill="#404040"/><rect x="2" y="2" width="2" height="1" fill="#404040"/><rect x="8" y="2" width="2" height="1" fill="#404040"/><rect x="2" y="3" width="1" height="1" fill="#404040"/><rect x="1" y="4" width="1" height="4" fill="#404040"/><rect x="2" y="8" width="1" height="1" fill="#404040"/><rect x="10" y="2" width="1" height="2" fill="#ffffff"/><rect x="11" y="4" width="1" height="4" fill="#ffffff"/><rect x="10" y="8" width="1" height="2" fill="#ffffff"/><rect x="8" y="10" width="2" height="1" fill="#ffffff"/><rect x="2" y="10" width="2" height="1" fill="#ffffff"/><rect x="4" y="11" width="4" height="1" fill="#ffffff"/><rect x="9" y="3" width="1" height="1" fill="#d4d0c8"/><rect x="10" y="4" width="1" height="4" fill="#d4d0c8"/><rect x="9" y="8" width="1" height="1" fill="#d4d0c8"/><rect x="8" y="9" width="2" height="1" fill="#d4d0c8"/><rect x="3" y="9" width="1" height="1" fill="#d4d0c8"/><rect x="4" y="10" width="4" height="1" fill="#d4d0c8"/><rect x="2" y="9" width="1" height="1" fill="#d4d0c8"/><rect x="5" y="4" width="2" height="1" fill="#808080"/><rect x="4" y="5" width="4" height="2" fill="#808080"/><rect x="5" y="7" width="2" height="1" fill="#808080"/></svg>
<div style="left:305px;top:364px;width:149px;height:73px;box-shadow:inset 1px 1px #ffffff,inset -1px -1px #ffffff"></div>
<div style="left:304px;top:363px;width:149px;height:73px;box-shadow:inset 1px 1px #808080,inset -1px -1px #808080"></div>
<div style="left:311px;top:360px;width:52px;height:7px;background:#d4d0c8"></div>
<span style="left:312px;top:359px;font:11px/13px 'Liberation Sans',sans-serif;color:#000;letter-spacing:-0.25px">Channel B</span>
<span style="left:306px;top:376px;font:11px/13px 'Liberation Sans',sans-serif;color:#000;">Scale:</span>
<div style="left:355px;top:370px;width:96px;height:20px;background:#fff;box-shadow:inset 1px 1px #808080,inset -1px -1px #ffffff,inset 2px 2px #404040,inset -2px -2px #d4d0c8"></div>
<span style="left:359px;top:374px;font:11px/13px 'Liberation Sans',sans-serif;color:#000;">2&nbsp; V/Div</span>
<span style="left:306px;top:396px;font:11px/13px 'Liberation Sans',sans-serif;color:#000;">Y pos.(Div):</span>
<div style="left:380px;top:391px;width:71px;height:20px;background:#fff;box-shadow:inset 1px 1px #808080,inset -1px -1px #ffffff,inset 2px 2px #404040,inset -2px -2px #d4d0c8"></div>
<span style="left:385px;top:395px;font:11px/13px 'Liberation Sans',sans-serif;color:#000;">0</span>
<div style="left:308px;top:416px;width:29px;height:18px;background:#d4d0c8;box-shadow:inset -1px -1px #404040,inset 1px 1px #ffffff,inset -2px -2px #808080,inset 2px 2px #d4d0c8"></div>
<span style="left:315px;top:419px;font:11px/13px 'Liberation Sans',sans-serif;color:#000;">AC</span>
<div style="left:337px;top:416px;width:27px;height:18px;background:#d4d0c8;box-shadow:inset -1px -1px #404040,inset 1px 1px #ffffff,inset -2px -2px #808080,inset 2px 2px #d4d0c8"></div>
<span style="left:348px;top:419px;font:11px/13px 'Liberation Sans',sans-serif;color:#000;">0</span>
<div style="left:364px;top:416px;width:33px;height:18px;background:repeating-conic-gradient(#fff 0% 25%, #d4d0c8 0% 50%) 0 0/2px 2px;box-shadow:inset 1px 1px #404040,inset -1px -1px #ffffff,inset 2px 2px #808080,inset -2px -2px #d4d0c8"></div>
<span style="left:373px;top:419px;font:11px/13px 'Liberation Sans',sans-serif;color:#000;">DC</span>
<div style="left:397px;top:416px;width:24px;height:18px;background:#d4d0c8;box-shadow:inset -1px -1px #404040,inset 1px 1px #ffffff,inset -2px -2px #808080,inset 2px 2px #d4d0c8"></div>
<span style="left:406px;top:419px;font:11px/13px 'Liberation Sans',sans-serif;color:#000;">-</span>
<svg style="left:439px;top:418px" width="12" height="12" shape-rendering="crispEdges"><rect x="2" y="2" width="8" height="8" fill="#d4d0c8"/><rect x="4" y="1" width="4" height="10" fill="#d4d0c8"/><rect x="1" y="4" width="10" height="4" fill="#d4d0c8"/><rect x="4" y="0" width="4" height="1" fill="#808080"/><rect x="2" y="1" width="2" height="1" fill="#808080"/><rect x="8" y="1" width="2" height="1" fill="#808080"/><rect x="1" y="2" width="1" height="2" fill="#808080"/><rect x="0" y="4" width="1" height="4" fill="#808080"/><rect x="1" y="8" width="1" height="2" fill="#808080"/><rect x="4" y="1" width="4" height="1" fill="#404040"/><rect x="2" y="2" width="2" height="1" fill="#404040"/><rect x="8" y="2" width="2" height="1" fill="#404040"/><rect x="2" y="3" width="1" height="1" fill="#404040"/><rect x="1" y="4" width="1" height="4" fill="#404040"/><rect x="2" y="8" width="1" height="1" fill="#404040"/><rect x="10" y="2" width="1" height="2" fill="#ffffff"/><rect x="11" y="4" width="1" height="4" fill="#ffffff"/><rect x="10" y="8" width="1" height="2" fill="#ffffff"/><rect x="8" y="10" width="2" height="1" fill="#ffffff"/><rect x="2" y="10" width="2" height="1" fill="#ffffff"/><rect x="4" y="11" width="4" height="1" fill="#ffffff"/><rect x="9" y="3" width="1" height="1" fill="#d4d0c8"/><rect x="10" y="4" width="1" height="4" fill="#d4d0c8"/><rect x="9" y="8" width="1" height="1" fill="#d4d0c8"/><rect x="8" y="9" width="2" height="1" fill="#d4d0c8"/><rect x="3" y="9" width="1" height="1" fill="#d4d0c8"/><rect x="4" y="10" width="4" height="1" fill="#d4d0c8"/><rect x="2" y="9" width="1" height="1" fill="#d4d0c8"/><rect x="5" y="4" width="2" height="1" fill="#808080"/><rect x="4" y="5" width="4" height="2" fill="#808080"/><rect x="5" y="7" width="2" height="1" fill="#808080"/></svg>
<div style="left:455px;top:364px;width:176px;height:73px;box-shadow:inset 1px 1px #ffffff,inset -1px -1px #ffffff"></div>
<div style="left:454px;top:363px;width:176px;height:73px;box-shadow:inset 1px 1px #808080,inset -1px -1px #808080"></div>
<div style="left:461px;top:360px;width:38px;height:7px;background:#d4d0c8"></div>
<span style="left:463px;top:359px;font:11px/13px 'Liberation Sans',sans-serif;color:#000;">Trigger</span>
<span style="left:457px;top:376px;font:11px/13px 'Liberation Sans',sans-serif;color:#000;">Edge:</span>
<div style="left:502px;top:374px;width:21px;height:17px;background:repeating-conic-gradient(#fff 0% 25%, #d4d0c8 0% 50%) 0 0/2px 2px;box-shadow:inset 1px 1px #404040,inset -1px -1px #ffffff,inset 2px 2px #808080,inset -2px -2px #d4d0c8"></div>
<div style="left:523px;top:374px;width:21px;height:17px;background:#d4d0c8;box-shadow:inset -1px -1px #404040,inset 1px 1px #ffffff,inset -2px -2px #808080,inset 2px 2px #d4d0c8"></div>
<svg style="left:0;top:0" width="638" height="441" shape-rendering="crispEdges"><rect x="507" y="385" width="5" height="1"/><rect x="511" y="378" width="1" height="8"/><rect x="511" y="378" width="5" height="1"/><rect x="509" y="382" width="1" height="1"/><rect x="510" y="381" width="1" height="1"/><rect x="512" y="381" width="1" height="1"/><rect x="513" y="382" width="1" height="1"/><rect x="528" y="378" width="5" height="1"/><rect x="532" y="378" width="1" height="7"/><rect x="532" y="384" width="5" height="1"/><rect x="530" y="380" width="1" height="1"/><rect x="531" y="381" width="1" height="1"/><rect x="533" y="381" width="1" height="1"/><rect x="534" y="380" width="1" height="1"/></svg>
<div style="left:547px;top:374px;width:24px;height:19px;background:#d4d0c8;box-shadow:inset -1px -1px #404040,inset 1px 1px #ffffff,inset -2px -2px #808080,inset 2px 2px #d4d0c8"></div>
<span style="left:555px;top:377px;font:11px/13px 'Liberation Sans',sans-serif;color:#000;">A</span>
<div style="left:571px;top:374px;width:24px;height:19px;background:repeating-conic-gradient(#fff 0% 25%, #d4d0c8 0% 50%) 0 0/2px 2px;box-shadow:inset 1px 1px #404040,inset -1px -1px #ffffff,inset 2px 2px #808080,inset -2px -2px #d4d0c8"></div>
<span style="left:579px;top:377px;font:11px/13px 'Liberation Sans',sans-serif;color:#000;">B</span>
<div style="left:595px;top:374px;width:28px;height:19px;background:#d4d0c8;box-shadow:inset -1px -1px #404040,inset 1px 1px #ffffff,inset -2px -2px #808080,inset 2px 2px #d4d0c8"></div>
<span style="left:600px;top:377px;font:11px/13px 'Liberation Sans',sans-serif;color:#000;">Ext</span>
<span style="left:457px;top:396px;font:11px/13px 'Liberation Sans',sans-serif;color:#000;letter-spacing:0.32px">Level:</span>
<div style="left:502px;top:395px;width:87px;height:18px;background:#fff;box-shadow:inset 1px 1px #808080,inset -1px -1px #ffffff,inset 2px 2px #404040,inset -2px -2px #d4d0c8"></div>
<span style="left:507px;top:399px;font:11px/13px 'Liberation Sans',sans-serif;color:#000;">0</span>
<div style="left:590px;top:395px;width:32px;height:18px;background:#fff;box-shadow:inset 1px 1px #808080,inset -1px -1px #ffffff,inset 2px 2px #404040,inset -2px -2px #d4d0c8"></div>
<span style="left:595px;top:399px;font:11px/13px 'Liberation Sans',sans-serif;color:#000;">&micro;V</span>
<div style="left:458px;top:414px;width:44px;height:20px;background:#d4d0c8;box-shadow:inset -1px -1px #404040,inset 1px 1px #ffffff,inset -2px -2px #808080,inset 2px 2px #d4d0c8"></div>
<span style="left:465px;top:418px;font:11px/13px 'Liberation Sans',sans-serif;color:#000;">Single</span>
<div style="left:502px;top:414px;width:48px;height:20px;background:repeating-conic-gradient(#fff 0% 25%, #d4d0c8 0% 50%) 0 0/2px 2px;box-shadow:inset 1px 1px #404040,inset -1px -1px #ffffff,inset 2px 2px #808080,inset -2px -2px #d4d0c8"></div>
<span style="left:508px;top:418px;font:11px/13px 'Liberation Sans',sans-serif;color:#000;">Normal</span>
<div style="left:550px;top:414px;width:37px;height:20px;background:#d4d0c8;box-shadow:inset -1px -1px #404040,inset 1px 1px #ffffff,inset -2px -2px #808080,inset 2px 2px #d4d0c8"></div>
<span style="left:557px;top:418px;font:11px/13px 'Liberation Sans',sans-serif;color:#000;letter-spacing:0.33px">Auto</span>
<div style="left:587px;top:414px;width:39px;height:20px;background:#d4d0c8;box-shadow:inset -1px -1px #404040,inset 1px 1px #ffffff,inset -2px -2px #808080,inset 2px 2px #d4d0c8"></div>
<span style="left:593px;top:418px;font:11px/13px 'Liberation Sans',sans-serif;color:#000;">None</span>
<svg style="left:0;top:0" width="638" height="441" shape-rendering="crispEdges"><rect x="632" y="427" width="2" height="2" fill="#fff"/><rect x="631" y="426" width="2" height="2" fill="#808080"/><rect x="632" y="431" width="2" height="2" fill="#fff"/><rect x="631" y="430" width="2" height="2" fill="#808080"/><rect x="632" y="435" width="2" height="2" fill="#fff"/><rect x="631" y="434" width="2" height="2" fill="#808080"/><rect x="628" y="431" width="2" height="2" fill="#fff"/><rect x="627" y="430" width="2" height="2" fill="#808080"/></svg></body></html>
